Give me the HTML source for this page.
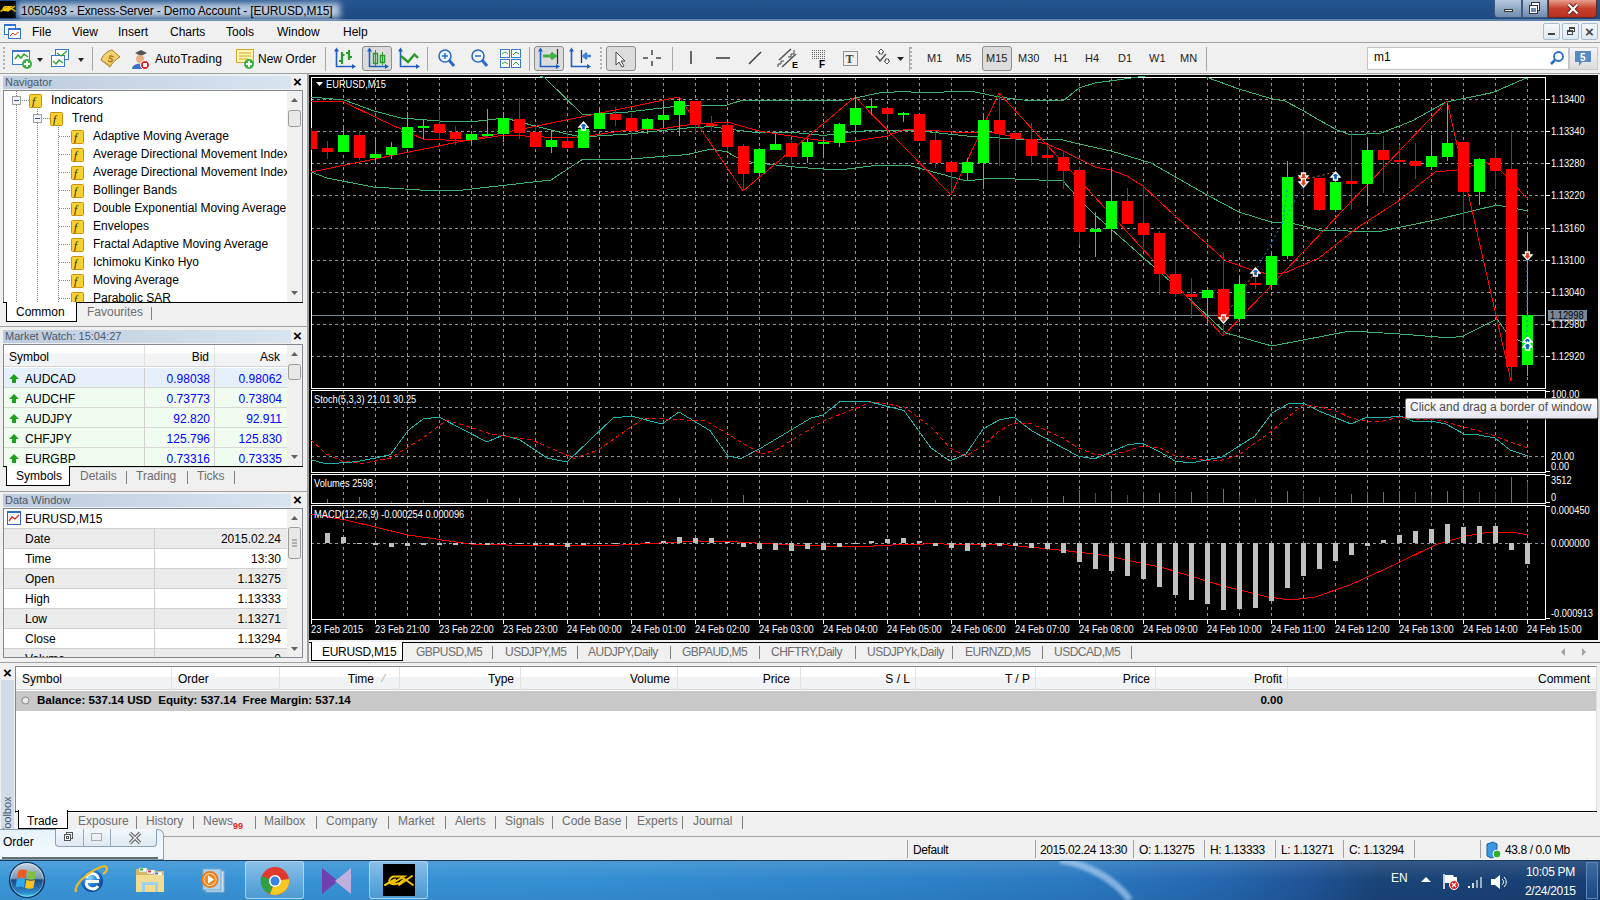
<!DOCTYPE html>
<html><head><meta charset="utf-8">
<style>
* { margin:0; padding:0; box-sizing:border-box; }
html,body { width:1600px; height:900px; overflow:hidden; background:#f0f0f0; font-family:"Liberation Sans", sans-serif; font-size:12px; color:#000; position:relative; }
.a { position:absolute; }
.t { position:absolute; white-space:nowrap; line-height:1.15; }
svg.a { overflow:visible; }
</style></head><body>
<div class="a" style="left:0px;top:0px;width:1600px;height:21px;background:linear-gradient(180deg,#26568f 0%,#214f88 50%,#1c4880 100%)"></div><div class="a" style="left:0px;top:19px;width:1600px;height:2px;background:#5d7fa8"></div><div class="a" style="left:0px;top:1px;width:16px;height:17px;background:#000"></div><svg class="a" style="left:0px;top:1px" width="16" height="17" viewBox="0 2 32 32"><path d="M2,21 L12,15.5 M10,12.5 H21 L9,19.5 M10,12.5 C6,14 5,18 8,19.5 C11,21 17,20 20,16 M16,21 L29,12 M18,12.5 L30,21" stroke="#f0c400" stroke-width="3" fill="none" stroke-linecap="round"/></svg><div class="a" style="left:18px;top:3px;width:322px;height:15px;background:rgba(200,212,228,.92);filter:blur(3px)"></div><div class="t" style="left:21px;top:5px;font-size:12px;color:#000;letter-spacing:-0.15px">1050493 - Exness-Server - Demo Account - [EURUSD,M15]</div><div class="a" style="left:1494px;top:0px;width:28px;height:18px;background:linear-gradient(180deg,#b7c8dc,#6e8cb0);border:1px solid #3c5a80;border-top:none;border-radius:0 0 0 4px"></div><div class="a" style="left:1504px;top:9px;width:9px;height:3px;background:#fff;border:1px solid #333"></div><div class="a" style="left:1522px;top:0px;width:26px;height:18px;background:linear-gradient(180deg,#b7c8dc,#6e8cb0);border:1px solid #3c5a80;border-top:none"></div><div class="a" style="left:1532px;top:3px;width:7px;height:7px;border:1px solid #fff;border-top-width:2px;box-shadow:0 0 0 1px #333"></div><div class="a" style="left:1530px;top:6px;width:7px;height:7px;background:#6e8cb0;border:1px solid #fff;border-top-width:2px;box-shadow:0 0 0 1px #333"></div><div class="a" style="left:1548px;top:0px;width:49px;height:18px;background:linear-gradient(180deg,#e8a090,#c8402c 50%,#b83020);border:1px solid #5a2a20;border-top:none;border-radius:0 0 4px 0"></div><svg class="a" style="left:1566px;top:3px" width="14" height="12"><path d="M2.5,1.5 L11.5,10.5 M11.5,1.5 L2.5,10.5" stroke="#5a2020" stroke-width="4"/><path d="M2.5,1.5 L11.5,10.5 M11.5,1.5 L2.5,10.5" stroke="#fff" stroke-width="2.2"/></svg><div class="a" style="left:0px;top:21px;width:1600px;height:21px;background:#f0f0f0"></div><svg class="a" style="left:3px;top:23px" width="19" height="17"><rect x="1.5" y="1.5" width="11" height="10" fill="#fff" stroke="#3070d0"/><rect x="1" y="1" width="12" height="2" fill="#3070d0"/><rect x="5.5" y="5.5" width="12" height="10" fill="#fff" stroke="#3070d0"/><rect x="5" y="5" width="13" height="2" fill="#3070d0"/><path d="M7,13 L10,10 L12,12 L16,9" stroke="#e04020" fill="none"/></svg><div class="t" style="left:32px;top:26px;font-size:12px;color:#000;">File</div><div class="t" style="left:72px;top:26px;font-size:12px;color:#000;">View</div><div class="t" style="left:118px;top:26px;font-size:12px;color:#000;">Insert</div><div class="t" style="left:170px;top:26px;font-size:12px;color:#000;">Charts</div><div class="t" style="left:226px;top:26px;font-size:12px;color:#000;">Tools</div><div class="t" style="left:277px;top:26px;font-size:12px;color:#000;">Window</div><div class="t" style="left:343px;top:26px;font-size:12px;color:#000;">Help</div><div class="a" style="left:1543px;top:23px;width:17px;height:17px;background:linear-gradient(180deg,#f4f8fc,#dfe8f2);border:1px solid #a8bcd4;border-radius:2px"></div><div class="a" style="left:1562px;top:23px;width:17px;height:17px;background:linear-gradient(180deg,#f4f8fc,#dfe8f2);border:1px solid #a8bcd4;border-radius:2px"></div><div class="a" style="left:1581px;top:23px;width:17px;height:17px;background:linear-gradient(180deg,#f4f8fc,#dfe8f2);border:1px solid #a8bcd4;border-radius:2px"></div><div class="a" style="left:1548px;top:33px;width:7px;height:2px;background:#444"></div><div class="a" style="left:1567px;top:30px;width:6px;height:5px;border:1px solid #444;border-top-width:2px"></div><div class="a" style="left:1569px;top:27px;width:6px;height:5px;border:1px solid #444;border-top-width:2px"></div><div class="t" style="left:1585px;top:23px;font-size:15px;color:#444;font-weight:bold">×</div><div class="a" style="left:0px;top:42px;width:1600px;height:1px;background:#a0a0a0"></div><div class="a" style="left:0px;top:43px;width:1600px;height:30px;background:#f0f0f0"></div><div class="a" style="left:0px;top:73px;width:1600px;height:1px;background:#a0a0a0"></div><div class="a" style="left:92px;top:47px;width:1px;height:24px;background:#a8a8a8"></div><div class="a" style="left:325px;top:47px;width:1px;height:24px;background:#a8a8a8"></div><div class="a" style="left:427px;top:47px;width:1px;height:24px;background:#a8a8a8"></div><div class="a" style="left:529px;top:47px;width:1px;height:24px;background:#a8a8a8"></div><div class="a" style="left:672px;top:47px;width:1px;height:24px;background:#a8a8a8"></div><div class="a" style="left:909px;top:47px;width:1px;height:24px;background:#a8a8a8"></div><div class="a" style="left:1206px;top:47px;width:1px;height:24px;background:#a8a8a8"></div><div class="a" style="left:3px;top:47px;width:2px;height:24px;background:repeating-linear-gradient(180deg,#b0b0b0 0 2px,transparent 2px 4px)"></div><div class="a" style="left:600px;top:47px;width:2px;height:24px;background:repeating-linear-gradient(180deg,#b0b0b0 0 2px,transparent 2px 4px)"></div><div class="a" style="left:910px;top:47px;width:2px;height:24px;background:repeating-linear-gradient(180deg,#b0b0b0 0 2px,transparent 2px 4px)"></div><svg class="a" style="left:10px;top:47px" width="80" height="24"><rect x="2.5" y="3.5" width="17" height="14" fill="#fff" stroke="#3a78d0"/><rect x="2" y="3" width="18" height="2" fill="#3a78d0"/><path d="M5,12 L8,8 L11,11 L14,7 L18,10" stroke="#30a030" fill="none" stroke-width="1.5"/><circle cx="17" cy="17" r="5" fill="#3cb040"/><path d="M14,17 H20 M17,14 V20" stroke="#fff" stroke-width="2"/><path d="M27,11 L33,11 L30,15 Z" fill="#222"/><rect x="45.5" y="2.5" width="13" height="10" fill="#fff" stroke="#3a78d0"/><rect x="41.5" y="8.5" width="13" height="11" fill="#fff" stroke="#3a78d0"/><path d="M43,14 L46,17 L49,13 L53,16" stroke="#30a030" fill="none" stroke-width="1.3"/><path d="M47,6 L51,9 L57,4" stroke="#30a030" fill="none" stroke-width="1.3"/><path d="M68,11 L74,11 L71,15 Z" fill="#222"/></svg><svg class="a" style="left:98px;top:47px" width="140" height="24"><path d="M3,13 C6,6 10,4 14,3 L22,10 C18,12 14,16 12,20 Z" fill="#f0d070" stroke="#a88020"/><path d="M5,14 L13,19" stroke="#c8a040"/><text x="10" y="15" font-size="10" font-weight="bold" fill="#b07010" font-family="Liberation Sans" transform="rotate(20 12 12)">5</text><path d="M37,6 L43,3 L49,6 L43,9 Z" fill="#555"/><circle cx="42" cy="12" r="4" fill="#e8b080"/><path d="M34,22 C34,15 50,15 50,22 Z" fill="#3a70c8"/><circle cx="47" cy="18" r="4.5" fill="#e02020" stroke="#fff"/><rect x="45" y="16" width="4" height="4" fill="#fff"/></svg><div class="t" style="left:155px;top:53px;font-size:12px;color:#000;letter-spacing:0.2px">AutoTrading</div><svg class="a" style="left:234px;top:47px" width="24" height="24"><rect x="2.5" y="2.5" width="17" height="13" fill="#fff4b0" stroke="#c8a830"/><path d="M5,6 H17 M5,9 H17 M5,12 H14" stroke="#c8a830"/><circle cx="15" cy="17" r="5" fill="#3cb040"/><path d="M12,17 H18 M15,14 V20" stroke="#fff" stroke-width="2"/></svg><div class="t" style="left:258px;top:53px;font-size:12px;color:#000;">New Order</div><div class="a" style="left:362px;top:46px;width:30px;height:25px;background:#dcdcdc;border:1px solid #8c8c8c;border-radius:3px"></div><div class="a" style="left:534px;top:46px;width:30px;height:25px;background:#dcdcdc;border:1px solid #8c8c8c;border-radius:3px"></div><div class="a" style="left:606px;top:46px;width:30px;height:25px;background:#dcdcdc;border:1px solid #8c8c8c;border-radius:3px"></div><div class="a" style="left:982px;top:46px;width:30px;height:25px;background:#dcdcdc;border:1px solid #8c8c8c;border-radius:3px"></div><svg class="a" style="left:330px;top:45px" width="600" height="28"><path d="M6.5,4 V21.5 H24" stroke="#1f5fc0" fill="none" stroke-width="1.6"/><path d="M4,6.5 L6.5,2.5 L9,6.5 Z M22,19 L26,21.5 L22,24 Z" fill="#1f5fc0"/><path d="M12,7 V19 M9,16 H12 M12,10 H14.5 M19,5 V15 M16,8 H19 M19,12 H22" stroke="#2a9a2a" stroke-width="2.2" fill="none"/><path d="M39.5,4 V21.5 H57" stroke="#1f5fc0" fill="none" stroke-width="1.6"/><path d="M37,6.5 L39.5,2.5 L42,6.5 Z M55,19 L59,21.5 L55,24 Z" fill="#1f5fc0"/><rect x="43.5" y="8.5" width="4" height="10" fill="none" stroke="#2a9a2a" stroke-width="1.5"/><path d="M45.5,5 V21" stroke="#2a9a2a"/><rect x="50.5" y="10.5" width="4" height="7" fill="none" stroke="#2a9a2a" stroke-width="1.5"/><path d="M52.5,7 V20" stroke="#2a9a2a"/><path d="M70.5,4 V21.5 H88" stroke="#1f5fc0" fill="none" stroke-width="1.6"/><path d="M68,6.5 L70.5,2.5 L73,6.5 Z M86,19 L90,21.5 L86,24 Z" fill="#1f5fc0"/><path d="M71,11 L78,17 L84.5,9.5 L88,13" stroke="#2a9a2a" stroke-width="2.4" fill="none"/><circle cx="115" cy="11" r="6" fill="#f0f8ff" stroke="#2a6ac8" stroke-width="1.6"/><path d="M119,15 L124,21" stroke="#2a6ac8" stroke-width="3"/><path d="M112,11 H118" stroke="#2a6ac8" stroke-width="1.5"/><path d="M115,8 V14" stroke="#2a6ac8" stroke-width="1.5"/><circle cx="148" cy="11" r="6" fill="#f0f8ff" stroke="#2a6ac8" stroke-width="1.6"/><path d="M152,15 L157,21" stroke="#2a6ac8" stroke-width="3"/><path d="M145,11 H151" stroke="#2a6ac8" stroke-width="1.5"/><g stroke="#3a78d0" fill="#fff"><rect x="170.5" y="4.5" width="9" height="8"/><rect x="181.5" y="4.5" width="9" height="8"/><rect x="170.5" y="14.5" width="9" height="8"/><rect x="181.5" y="14.5" width="9" height="8"/></g><path d="M172,9 L175,7 L178,9 M183,10 L186,7 L189,9 M172,19 L175,17 L178,19 M183,20 L186,17 L189,20" stroke="#30a030" fill="none"/><path d="M210.5,4 V21.5 H228" stroke="#1f5fc0" fill="none" stroke-width="1.6"/><path d="M208,6.5 L210.5,2.5 L213,6.5 Z M226,19 L230,21.5 L226,24 Z" fill="#1f5fc0"/><path d="M213,11 H224 M221,8 L225,11 L221,14" stroke="#40b040" stroke-width="3" fill="none"/><path d="M227.5,4 V19" stroke="#333" stroke-width="1.3"/><path d="M241.5,4 V21.5 H259" stroke="#1f5fc0" fill="none" stroke-width="1.6"/><path d="M239,6.5 L241.5,2.5 L244,6.5 Z M257,19 L261,21.5 L257,24 Z" fill="#1f5fc0"/><path d="M251.5,5 V18" stroke="#333" stroke-width="1.3"/><path d="M254,11 H261 M257,8 L253.5,11 L257,14" stroke="#3a88e0" stroke-width="2.5" fill="none"/><path d="M286,7 L286,20 L289,17 L292,22 L294,21 L291,16 L295,16 Z" fill="#fff" stroke="#444"/><path d="M322,5 V10 M322,16 V21 M313,13 H318 M326,13 H331" stroke="#444" stroke-width="1.5"/><path d="M361,6 V19" stroke="#444" stroke-width="1.6"/><path d="M386,13 H400" stroke="#444" stroke-width="1.6"/><path d="M419,19 L431,7" stroke="#444" stroke-width="1.6"/><path d="M449,15 L461,4 M452,22 L466,9" stroke="#555" stroke-width="1.6" fill="none"/><path d="M448,22 V19 H451 V16 H454 M458,12 H461 V9 H464 V5" stroke="#444" fill="none"/><text x="462" y="23" font-size="9" font-weight="bold" font-family="Liberation Sans">E</text><g fill="#666"><rect x="482" y="5" width="1" height="1"/><rect x="482" y="7" width="1" height="1"/><rect x="482" y="9" width="1" height="1"/><rect x="482" y="11" width="1" height="1"/><rect x="482" y="13" width="1" height="1"/><rect x="484" y="5" width="1" height="1"/><rect x="484" y="7" width="1" height="1"/><rect x="484" y="9" width="1" height="1"/><rect x="484" y="11" width="1" height="1"/><rect x="484" y="13" width="1" height="1"/><rect x="486" y="5" width="1" height="1"/><rect x="486" y="7" width="1" height="1"/><rect x="486" y="9" width="1" height="1"/><rect x="486" y="11" width="1" height="1"/><rect x="486" y="13" width="1" height="1"/><rect x="488" y="5" width="1" height="1"/><rect x="488" y="7" width="1" height="1"/><rect x="488" y="9" width="1" height="1"/><rect x="488" y="11" width="1" height="1"/><rect x="488" y="13" width="1" height="1"/><rect x="490" y="5" width="1" height="1"/><rect x="490" y="7" width="1" height="1"/><rect x="490" y="9" width="1" height="1"/><rect x="490" y="11" width="1" height="1"/><rect x="490" y="13" width="1" height="1"/><rect x="492" y="5" width="1" height="1"/><rect x="492" y="7" width="1" height="1"/><rect x="492" y="9" width="1" height="1"/><rect x="492" y="11" width="1" height="1"/><rect x="492" y="13" width="1" height="1"/><rect x="494" y="5" width="1" height="1"/><rect x="494" y="7" width="1" height="1"/><rect x="494" y="9" width="1" height="1"/><rect x="494" y="11" width="1" height="1"/><rect x="494" y="13" width="1" height="1"/></g><text x="489" y="23" font-size="10" font-weight="bold" font-family="Liberation Sans">F</text><rect x="513.5" y="6.5" width="14" height="14" fill="none" stroke="#333" stroke-dasharray="1,1"/><text x="515.5" y="18" font-size="12" font-family="Liberation Serif" font-weight="bold" fill="#444">T</text><path d="M546,11 L550,16 L556,9" stroke="#555" stroke-width="1.5" fill="none"/><path d="M551,4 L554,7 L552.5,7 L552.5,9 L549.5,9 L549.5,7 L548,7 Z M557,19 L560,16 L558.5,16 L558.5,14 L555.5,14 L555.5,16 L554,16 Z" fill="#fff" stroke="#555"/><path d="M567,12 L574,12 L570.5,16 Z" fill="#222"/></svg><div class="t" style="left:927px;top:52px;font-size:11px;color:#222;">M1</div><div class="t" style="left:956px;top:52px;font-size:11px;color:#222;">M5</div><div class="t" style="left:986px;top:52px;font-size:11px;color:#222;">M15</div><div class="t" style="left:1018px;top:52px;font-size:11px;color:#222;">M30</div><div class="t" style="left:1054px;top:52px;font-size:11px;color:#222;">H1</div><div class="t" style="left:1085px;top:52px;font-size:11px;color:#222;">H4</div><div class="t" style="left:1118px;top:52px;font-size:11px;color:#222;">D1</div><div class="t" style="left:1149px;top:52px;font-size:11px;color:#222;">W1</div><div class="t" style="left:1180px;top:52px;font-size:11px;color:#222;">MN</div><div class="a" style="left:1367px;top:47px;width:202px;height:23px;background:#fff;border:1px solid #c0c4c8"></div><div class="t" style="left:1374px;top:51px;font-size:12px;color:#000;">m1</div><svg class="a" style="left:1549px;top:50px" width="16" height="16"><circle cx="9.5" cy="6.5" r="4.5" fill="none" stroke="#2a6ac8" stroke-width="1.8"/><path d="M6,10 L2,14" stroke="#2a6ac8" stroke-width="2.5"/></svg><div class="a" style="left:1569px;top:47px;width:29px;height:23px;background:linear-gradient(180deg,#f4f4f4,#dcdcdc);border:1px solid #c8c8c8"></div><svg class="a" style="left:1574px;top:50px" width="20" height="18"><path d="M1,1 H17 V12 H8 L5,16 L5,12 H1 Z" fill="#5a88c0"/><text x="6" y="11" font-size="10" font-weight="bold" fill="#fff" font-family="Liberation Sans">5</text></svg><div class="a" style="left:0px;top:74px;width:307px;height:588px;background:#f0f0f0"></div><div class="a" style="left:307px;top:74px;width:2px;height:588px;background:#a0a0a0"></div><div class="a" style="left:3px;top:76px;width:288px;height:13px;background:linear-gradient(90deg,#bccbdd,#d8e4f0)"></div><div class="t" style="left:5px;top:76px;font-size:11px;color:#4a5868;">Navigator</div><div class="t" style="left:293px;top:73px;font-size:15px;color:#000;font-weight:bold">×</div><div class="a" style="left:3px;top:90px;width:300px;height:213px;background:#fff;border:1px solid #828790;border-bottom:none"></div><div class="a" style="left:3px;top:302px;width:300px;height:1px;background:#000"></div><div class="a" style="left:287px;top:91px;width:15px;height:211px;background:#f0f0f0"></div><svg class="a" style="left:287px;top:91px" width="15" height="211"><path d="M4,11 L7.5,7 L11,11 Z" fill="#606060"/><path d="M4,200 L7.5,204 L11,200 Z" fill="#606060"/><rect x="1.5" y="19.5" width="12" height="16" rx="2" fill="#e8e8e8" stroke="#9a9a9a"/></svg><div class="a" style="left:4px;top:91px;width:283px;height:211px;overflow:hidden"><svg class="a" style="left:0;top:0" width="283" height="211"><g stroke="#808080" stroke-dasharray="1,1"><line x1="12.5" y1="0" x2="12.5" y2="211"/><line x1="33.5" y1="14" x2="33.5" y2="211"/><line x1="54.5" y1="32" x2="54.5" y2="211"/><line x1="18" y1="9.5" x2="25" y2="9.5"/><line x1="39" y1="27.5" x2="46" y2="27.5"/><line x1="55" y1="45.5" x2="67" y2="45.5"/><line x1="55" y1="63.5" x2="67" y2="63.5"/><line x1="55" y1="81.5" x2="67" y2="81.5"/><line x1="55" y1="99.5" x2="67" y2="99.5"/><line x1="55" y1="117.5" x2="67" y2="117.5"/><line x1="55" y1="135.5" x2="67" y2="135.5"/><line x1="55" y1="153.5" x2="67" y2="153.5"/><line x1="55" y1="171.5" x2="67" y2="171.5"/><line x1="55" y1="189.5" x2="67" y2="189.5"/><line x1="55" y1="207.5" x2="67" y2="207.5"/></g><rect x="8.5" y="5.5" width="8" height="8" fill="#f4f4f4" stroke="#a0a0a0"/><line x1="10" y1="9.5" x2="15" y2="9.5" stroke="#3050a0"/><rect x="25.5" y="3.5" width="12" height="13" rx="1" fill="#f8d030" stroke="#c89010"/><text x="28" y="14" font-size="11" font-style="italic" font-family="Liberation Serif" fill="#222">f</text><rect x="29.5" y="23.5" width="8" height="8" fill="#f4f4f4" stroke="#a0a0a0"/><line x1="31" y1="27.5" x2="36" y2="27.5" stroke="#3050a0"/><rect x="46.5" y="21.5" width="12" height="13" rx="1" fill="#f8d030" stroke="#c89010"/><text x="49" y="32" font-size="11" font-style="italic" font-family="Liberation Serif" fill="#222">f</text><rect x="67.5" y="39.5" width="12" height="13" rx="1" fill="#f8d030" stroke="#c89010"/><text x="70" y="50" font-size="11" font-style="italic" font-family="Liberation Serif" fill="#222">f</text><rect x="67.5" y="57.5" width="12" height="13" rx="1" fill="#f8d030" stroke="#c89010"/><text x="70" y="68" font-size="11" font-style="italic" font-family="Liberation Serif" fill="#222">f</text><rect x="67.5" y="75.5" width="12" height="13" rx="1" fill="#f8d030" stroke="#c89010"/><text x="70" y="86" font-size="11" font-style="italic" font-family="Liberation Serif" fill="#222">f</text><rect x="67.5" y="93.5" width="12" height="13" rx="1" fill="#f8d030" stroke="#c89010"/><text x="70" y="104" font-size="11" font-style="italic" font-family="Liberation Serif" fill="#222">f</text><rect x="67.5" y="111.5" width="12" height="13" rx="1" fill="#f8d030" stroke="#c89010"/><text x="70" y="122" font-size="11" font-style="italic" font-family="Liberation Serif" fill="#222">f</text><rect x="67.5" y="129.5" width="12" height="13" rx="1" fill="#f8d030" stroke="#c89010"/><text x="70" y="140" font-size="11" font-style="italic" font-family="Liberation Serif" fill="#222">f</text><rect x="67.5" y="147.5" width="12" height="13" rx="1" fill="#f8d030" stroke="#c89010"/><text x="70" y="158" font-size="11" font-style="italic" font-family="Liberation Serif" fill="#222">f</text><rect x="67.5" y="165.5" width="12" height="13" rx="1" fill="#f8d030" stroke="#c89010"/><text x="70" y="176" font-size="11" font-style="italic" font-family="Liberation Serif" fill="#222">f</text><rect x="67.5" y="183.5" width="12" height="13" rx="1" fill="#f8d030" stroke="#c89010"/><text x="70" y="194" font-size="11" font-style="italic" font-family="Liberation Serif" fill="#222">f</text><rect x="67.5" y="201.5" width="12" height="13" rx="1" fill="#f8d030" stroke="#c89010"/><text x="70" y="212" font-size="11" font-style="italic" font-family="Liberation Serif" fill="#222">f</text></svg><div class="t" style="left:47px;top:3px;font-size:12px;color:#000;">Indicators</div><div class="t" style="left:68px;top:21px;font-size:12px;color:#000;">Trend</div><div class="t" style="left:89px;top:39px;font-size:12px;color:#000;">Adaptive Moving Average</div><div class="t" style="left:89px;top:57px;font-size:12px;color:#000;">Average Directional Movement Index</div><div class="t" style="left:89px;top:75px;font-size:12px;color:#000;">Average Directional Movement Index Wilder</div><div class="t" style="left:89px;top:93px;font-size:12px;color:#000;">Bollinger Bands</div><div class="t" style="left:89px;top:111px;font-size:12px;color:#000;">Double Exponential Moving Average</div><div class="t" style="left:89px;top:129px;font-size:12px;color:#000;">Envelopes</div><div class="t" style="left:89px;top:147px;font-size:12px;color:#000;">Fractal Adaptive Moving Average</div><div class="t" style="left:89px;top:165px;font-size:12px;color:#000;">Ichimoku Kinko Hyo</div><div class="t" style="left:89px;top:183px;font-size:12px;color:#000;">Moving Average</div><div class="t" style="left:89px;top:201px;font-size:12px;color:#000;">Parabolic SAR</div></div><div class="a" style="left:3px;top:303px;width:300px;height:21px;background:#f0f0f0"></div><div class="a" style="left:6px;top:302px;width:71px;height:20px;background:#fff;border:1px solid #000;border-top:none"></div><div class="t" style="left:16px;top:306px;font-size:12px;color:#000;">Common</div><div class="t" style="left:87px;top:306px;font-size:12px;color:#6d6d6d;">Favourites</div><div class="a" style="left:151px;top:307px;width:1px;height:13px;background:#808080"></div><div class="a" style="left:0px;top:326px;width:307px;height:1px;background:#a0a0a0"></div><div class="a" style="left:3px;top:330px;width:288px;height:13px;background:linear-gradient(90deg,#bccbdd,#d8e4f0)"></div><div class="t" style="left:5px;top:330px;font-size:11px;color:#4a5868;">Market Watch: 15:04:27</div><div class="t" style="left:293px;top:327px;font-size:15px;color:#000;font-weight:bold">×</div><div class="a" style="left:3px;top:344px;width:300px;height:123px;background:#fff;border:1px solid #828790;border-bottom:none"></div><div class="a" style="left:4px;top:345px;width:283px;height:22px;background:linear-gradient(180deg,#fff 0%,#fff 40%,#f2f3f5 41%,#f2f3f5 100%);border-bottom:1px solid #d5d5d5"></div><div class="a" style="left:144px;top:345px;width:1px;height:22px;background:#e0e0e0"></div><div class="a" style="left:214px;top:345px;width:1px;height:22px;background:#e0e0e0"></div><div class="t" style="left:9px;top:351px;font-size:12px;color:#000;">Symbol</div><div class="t" style="right:1391px;top:351px;font-size:12px;color:#000;">Bid</div><div class="t" style="right:1320px;top:351px;font-size:12px;color:#000;">Ask</div><div class="a" style="left:4px;top:368px;width:283px;height:20px;background:#e6f0fb;border-bottom:1px solid #d8d8d8"></div><div class="a" style="left:144px;top:368px;width:1px;height:20px;background:#d0d0d0"></div><div class="a" style="left:214px;top:368px;width:1px;height:20px;background:#d0d0d0"></div><svg class="a" style="left:9px;top:374px" width="10" height="10"><path d="M5,0 L10,5 L7,5 L7,9 L3,9 L3,5 L0,5 Z" fill="#20a020"/></svg><div class="t" style="left:25px;top:373px;font-size:12px;color:#000;">AUDCAD</div><div class="t" style="right:1390px;top:373px;font-size:12px;color:#0000ff;">0.98038</div><div class="t" style="right:1318px;top:373px;font-size:12px;color:#0000ff;">0.98062</div><div class="a" style="left:4px;top:388px;width:283px;height:20px;background:#effcef;border-bottom:1px solid #d8d8d8"></div><div class="a" style="left:144px;top:388px;width:1px;height:20px;background:#d0d0d0"></div><div class="a" style="left:214px;top:388px;width:1px;height:20px;background:#d0d0d0"></div><svg class="a" style="left:9px;top:394px" width="10" height="10"><path d="M5,0 L10,5 L7,5 L7,9 L3,9 L3,5 L0,5 Z" fill="#20a020"/></svg><div class="t" style="left:25px;top:393px;font-size:12px;color:#000;">AUDCHF</div><div class="t" style="right:1390px;top:393px;font-size:12px;color:#0000ff;">0.73773</div><div class="t" style="right:1318px;top:393px;font-size:12px;color:#0000ff;">0.73804</div><div class="a" style="left:4px;top:408px;width:283px;height:20px;background:#effcef;border-bottom:1px solid #d8d8d8"></div><div class="a" style="left:144px;top:408px;width:1px;height:20px;background:#d0d0d0"></div><div class="a" style="left:214px;top:408px;width:1px;height:20px;background:#d0d0d0"></div><svg class="a" style="left:9px;top:414px" width="10" height="10"><path d="M5,0 L10,5 L7,5 L7,9 L3,9 L3,5 L0,5 Z" fill="#20a020"/></svg><div class="t" style="left:25px;top:413px;font-size:12px;color:#000;">AUDJPY</div><div class="t" style="right:1390px;top:413px;font-size:12px;color:#0000ff;">92.820</div><div class="t" style="right:1318px;top:413px;font-size:12px;color:#0000ff;">92.911</div><div class="a" style="left:4px;top:428px;width:283px;height:20px;background:#effcef;border-bottom:1px solid #d8d8d8"></div><div class="a" style="left:144px;top:428px;width:1px;height:20px;background:#d0d0d0"></div><div class="a" style="left:214px;top:428px;width:1px;height:20px;background:#d0d0d0"></div><svg class="a" style="left:9px;top:434px" width="10" height="10"><path d="M5,0 L10,5 L7,5 L7,9 L3,9 L3,5 L0,5 Z" fill="#20a020"/></svg><div class="t" style="left:25px;top:433px;font-size:12px;color:#000;">CHFJPY</div><div class="t" style="right:1390px;top:433px;font-size:12px;color:#0000ff;">125.796</div><div class="t" style="right:1318px;top:433px;font-size:12px;color:#0000ff;">125.830</div><div class="a" style="left:4px;top:448px;width:283px;height:20px;background:#effcef;border-bottom:1px solid #d8d8d8"></div><div class="a" style="left:144px;top:448px;width:1px;height:20px;background:#d0d0d0"></div><div class="a" style="left:214px;top:448px;width:1px;height:20px;background:#d0d0d0"></div><svg class="a" style="left:9px;top:454px" width="10" height="10"><path d="M5,0 L10,5 L7,5 L7,9 L3,9 L3,5 L0,5 Z" fill="#20a020"/></svg><div class="t" style="left:25px;top:453px;font-size:12px;color:#000;">EURGBP</div><div class="t" style="right:1390px;top:453px;font-size:12px;color:#0000ff;">0.73316</div><div class="t" style="right:1318px;top:453px;font-size:12px;color:#0000ff;">0.73335</div><div class="a" style="left:287px;top:345px;width:15px;height:121px;background:#f0f0f0"></div><svg class="a" style="left:287px;top:345px" width="15" height="121"><path d="M4,11 L7.5,7 L11,11 Z" fill="#606060"/><path d="M4,110 L7.5,114 L11,110 Z" fill="#606060"/><rect x="1.5" y="19.5" width="12" height="15" rx="2" fill="#e8e8e8" stroke="#9a9a9a"/></svg><div class="a" style="left:3px;top:466px;width:300px;height:1px;background:#000"></div><div class="a" style="left:6px;top:466px;width:64px;height:20px;background:#fff;border:1px solid #000;border-top:none"></div><div class="t" style="left:16px;top:470px;font-size:12px;color:#000;">Symbols</div><div class="t" style="left:80px;top:470px;font-size:12px;color:#6d6d6d;">Details</div><div class="a" style="left:126px;top:471px;width:1px;height:13px;background:#808080"></div><div class="t" style="left:136px;top:470px;font-size:12px;color:#6d6d6d;">Trading</div><div class="a" style="left:187px;top:471px;width:1px;height:13px;background:#808080"></div><div class="t" style="left:197px;top:470px;font-size:12px;color:#6d6d6d;">Ticks</div><div class="a" style="left:234px;top:471px;width:1px;height:13px;background:#808080"></div><div class="a" style="left:0px;top:491px;width:307px;height:1px;background:#a0a0a0"></div><div class="a" style="left:3px;top:494px;width:288px;height:13px;background:linear-gradient(90deg,#bccbdd,#d8e4f0)"></div><div class="t" style="left:5px;top:494px;font-size:11px;color:#4a5868;">Data Window</div><div class="t" style="left:293px;top:491px;font-size:15px;color:#000;font-weight:bold">×</div><div class="a" style="left:3px;top:508px;width:300px;height:150px;background:#fff;border:1px solid #828790"></div><svg class="a" style="left:7px;top:511px" width="14" height="14"><rect x="0.5" y="0.5" width="13" height="13" fill="#fff" stroke="#2a6ac8"/><rect x="0" y="0" width="14" height="2" fill="#2a6ac8"/><path d="M2,10 L5,6 L8,8 L12,4" stroke="#e02020" fill="none" stroke-width="1.3"/></svg><div class="t" style="left:25px;top:513px;font-size:12px;color:#000;">EURUSD,M15</div><div class="a" style="left:4px;top:528px;width:283px;height:20px;background:#ebebeb;border-top:1px solid #d0d0d0"></div><div class="a" style="left:154px;top:528px;width:1px;height:20px;background:#d0d0d0"></div><div class="t" style="left:25px;top:533px;font-size:12px;color:#000;">Date</div><div class="t" style="right:1319px;top:533px;font-size:12px;color:#000;">2015.02.24</div><div class="a" style="left:4px;top:548px;width:283px;height:20px;background:#fff;border-top:1px solid #d0d0d0"></div><div class="a" style="left:154px;top:548px;width:1px;height:20px;background:#d0d0d0"></div><div class="t" style="left:25px;top:553px;font-size:12px;color:#000;">Time</div><div class="t" style="right:1319px;top:553px;font-size:12px;color:#000;">13:30</div><div class="a" style="left:4px;top:568px;width:283px;height:20px;background:#ebebeb;border-top:1px solid #d0d0d0"></div><div class="a" style="left:154px;top:568px;width:1px;height:20px;background:#d0d0d0"></div><div class="t" style="left:25px;top:573px;font-size:12px;color:#000;">Open</div><div class="t" style="right:1319px;top:573px;font-size:12px;color:#000;">1.13275</div><div class="a" style="left:4px;top:588px;width:283px;height:20px;background:#fff;border-top:1px solid #d0d0d0"></div><div class="a" style="left:154px;top:588px;width:1px;height:20px;background:#d0d0d0"></div><div class="t" style="left:25px;top:593px;font-size:12px;color:#000;">High</div><div class="t" style="right:1319px;top:593px;font-size:12px;color:#000;">1.13333</div><div class="a" style="left:4px;top:608px;width:283px;height:20px;background:#ebebeb;border-top:1px solid #d0d0d0"></div><div class="a" style="left:154px;top:608px;width:1px;height:20px;background:#d0d0d0"></div><div class="t" style="left:25px;top:613px;font-size:12px;color:#000;">Low</div><div class="t" style="right:1319px;top:613px;font-size:12px;color:#000;">1.13271</div><div class="a" style="left:4px;top:628px;width:283px;height:20px;background:#fff;border-top:1px solid #d0d0d0"></div><div class="a" style="left:154px;top:628px;width:1px;height:20px;background:#d0d0d0"></div><div class="t" style="left:25px;top:633px;font-size:12px;color:#000;">Close</div><div class="t" style="right:1319px;top:633px;font-size:12px;color:#000;">1.13294</div><div class="a" style="left:4px;top:648px;width:283px;height:9px;background:#ebebeb;border-top:1px solid #d0d0d0"></div><div class="a" style="left:154px;top:648px;width:1px;height:9px;background:#d0d0d0"></div><div class="a" style="left:4px;top:648px;width:283px;height:9px;overflow:hidden"><div class="t" style="left:21px;top:5px;font-size:12px">Volume</div><div class="t" style="right:6px;top:5px;font-size:12px">0</div></div><div class="a" style="left:287px;top:509px;width:15px;height:148px;background:#f0f0f0"></div><svg class="a" style="left:287px;top:509px" width="15" height="148"><path d="M4,11 L7.5,7 L11,11 Z" fill="#606060"/><path d="M4,138 L7.5,142 L11,138 Z" fill="#606060"/><rect x="1.5" y="18.5" width="12" height="31" rx="2" fill="#e8e8e8" stroke="#9a9a9a"/><path d="M5,31 H10 M5,34 H10 M5,37 H10" stroke="#777"/></svg><svg width="1291" height="565" viewBox="309 75 1291 565" style="position:absolute;left:309px;top:75px" shape-rendering="crispEdges">
<rect x="309" y="75" width="1289" height="565" fill="#000"/><rect x="1598" y="75" width="2" height="565" fill="#f0f0f0"/>
<g stroke="#8898a8" stroke-width="1" stroke-dasharray="3,3"><line x1="343.5" y1="77" x2="343.5" y2="388"/><line x1="343.5" y1="390" x2="343.5" y2="472"/><line x1="343.5" y1="474" x2="343.5" y2="503"/><line x1="343.5" y1="505" x2="343.5" y2="619"/><line x1="375.5" y1="77" x2="375.5" y2="388"/><line x1="375.5" y1="390" x2="375.5" y2="472"/><line x1="375.5" y1="474" x2="375.5" y2="503"/><line x1="375.5" y1="505" x2="375.5" y2="619"/><line x1="407.5" y1="77" x2="407.5" y2="388"/><line x1="407.5" y1="390" x2="407.5" y2="472"/><line x1="407.5" y1="474" x2="407.5" y2="503"/><line x1="407.5" y1="505" x2="407.5" y2="619"/><line x1="439.5" y1="77" x2="439.5" y2="388"/><line x1="439.5" y1="390" x2="439.5" y2="472"/><line x1="439.5" y1="474" x2="439.5" y2="503"/><line x1="439.5" y1="505" x2="439.5" y2="619"/><line x1="471.5" y1="77" x2="471.5" y2="388"/><line x1="471.5" y1="390" x2="471.5" y2="472"/><line x1="471.5" y1="474" x2="471.5" y2="503"/><line x1="471.5" y1="505" x2="471.5" y2="619"/><line x1="503.5" y1="77" x2="503.5" y2="388"/><line x1="503.5" y1="390" x2="503.5" y2="472"/><line x1="503.5" y1="474" x2="503.5" y2="503"/><line x1="503.5" y1="505" x2="503.5" y2="619"/><line x1="535.5" y1="77" x2="535.5" y2="388"/><line x1="535.5" y1="390" x2="535.5" y2="472"/><line x1="535.5" y1="474" x2="535.5" y2="503"/><line x1="535.5" y1="505" x2="535.5" y2="619"/><line x1="567.5" y1="77" x2="567.5" y2="388"/><line x1="567.5" y1="390" x2="567.5" y2="472"/><line x1="567.5" y1="474" x2="567.5" y2="503"/><line x1="567.5" y1="505" x2="567.5" y2="619"/><line x1="599.5" y1="77" x2="599.5" y2="388"/><line x1="599.5" y1="390" x2="599.5" y2="472"/><line x1="599.5" y1="474" x2="599.5" y2="503"/><line x1="599.5" y1="505" x2="599.5" y2="619"/><line x1="631.5" y1="77" x2="631.5" y2="388"/><line x1="631.5" y1="390" x2="631.5" y2="472"/><line x1="631.5" y1="474" x2="631.5" y2="503"/><line x1="631.5" y1="505" x2="631.5" y2="619"/><line x1="663.5" y1="77" x2="663.5" y2="388"/><line x1="663.5" y1="390" x2="663.5" y2="472"/><line x1="663.5" y1="474" x2="663.5" y2="503"/><line x1="663.5" y1="505" x2="663.5" y2="619"/><line x1="695.5" y1="77" x2="695.5" y2="388"/><line x1="695.5" y1="390" x2="695.5" y2="472"/><line x1="695.5" y1="474" x2="695.5" y2="503"/><line x1="695.5" y1="505" x2="695.5" y2="619"/><line x1="727.5" y1="77" x2="727.5" y2="388"/><line x1="727.5" y1="390" x2="727.5" y2="472"/><line x1="727.5" y1="474" x2="727.5" y2="503"/><line x1="727.5" y1="505" x2="727.5" y2="619"/><line x1="759.5" y1="77" x2="759.5" y2="388"/><line x1="759.5" y1="390" x2="759.5" y2="472"/><line x1="759.5" y1="474" x2="759.5" y2="503"/><line x1="759.5" y1="505" x2="759.5" y2="619"/><line x1="791.5" y1="77" x2="791.5" y2="388"/><line x1="791.5" y1="390" x2="791.5" y2="472"/><line x1="791.5" y1="474" x2="791.5" y2="503"/><line x1="791.5" y1="505" x2="791.5" y2="619"/><line x1="823.5" y1="77" x2="823.5" y2="388"/><line x1="823.5" y1="390" x2="823.5" y2="472"/><line x1="823.5" y1="474" x2="823.5" y2="503"/><line x1="823.5" y1="505" x2="823.5" y2="619"/><line x1="855.5" y1="77" x2="855.5" y2="388"/><line x1="855.5" y1="390" x2="855.5" y2="472"/><line x1="855.5" y1="474" x2="855.5" y2="503"/><line x1="855.5" y1="505" x2="855.5" y2="619"/><line x1="887.5" y1="77" x2="887.5" y2="388"/><line x1="887.5" y1="390" x2="887.5" y2="472"/><line x1="887.5" y1="474" x2="887.5" y2="503"/><line x1="887.5" y1="505" x2="887.5" y2="619"/><line x1="919.5" y1="77" x2="919.5" y2="388"/><line x1="919.5" y1="390" x2="919.5" y2="472"/><line x1="919.5" y1="474" x2="919.5" y2="503"/><line x1="919.5" y1="505" x2="919.5" y2="619"/><line x1="951.5" y1="77" x2="951.5" y2="388"/><line x1="951.5" y1="390" x2="951.5" y2="472"/><line x1="951.5" y1="474" x2="951.5" y2="503"/><line x1="951.5" y1="505" x2="951.5" y2="619"/><line x1="983.5" y1="77" x2="983.5" y2="388"/><line x1="983.5" y1="390" x2="983.5" y2="472"/><line x1="983.5" y1="474" x2="983.5" y2="503"/><line x1="983.5" y1="505" x2="983.5" y2="619"/><line x1="1015.5" y1="77" x2="1015.5" y2="388"/><line x1="1015.5" y1="390" x2="1015.5" y2="472"/><line x1="1015.5" y1="474" x2="1015.5" y2="503"/><line x1="1015.5" y1="505" x2="1015.5" y2="619"/><line x1="1047.5" y1="77" x2="1047.5" y2="388"/><line x1="1047.5" y1="390" x2="1047.5" y2="472"/><line x1="1047.5" y1="474" x2="1047.5" y2="503"/><line x1="1047.5" y1="505" x2="1047.5" y2="619"/><line x1="1079.5" y1="77" x2="1079.5" y2="388"/><line x1="1079.5" y1="390" x2="1079.5" y2="472"/><line x1="1079.5" y1="474" x2="1079.5" y2="503"/><line x1="1079.5" y1="505" x2="1079.5" y2="619"/><line x1="1111.5" y1="77" x2="1111.5" y2="388"/><line x1="1111.5" y1="390" x2="1111.5" y2="472"/><line x1="1111.5" y1="474" x2="1111.5" y2="503"/><line x1="1111.5" y1="505" x2="1111.5" y2="619"/><line x1="1143.5" y1="77" x2="1143.5" y2="388"/><line x1="1143.5" y1="390" x2="1143.5" y2="472"/><line x1="1143.5" y1="474" x2="1143.5" y2="503"/><line x1="1143.5" y1="505" x2="1143.5" y2="619"/><line x1="1175.5" y1="77" x2="1175.5" y2="388"/><line x1="1175.5" y1="390" x2="1175.5" y2="472"/><line x1="1175.5" y1="474" x2="1175.5" y2="503"/><line x1="1175.5" y1="505" x2="1175.5" y2="619"/><line x1="1207.5" y1="77" x2="1207.5" y2="388"/><line x1="1207.5" y1="390" x2="1207.5" y2="472"/><line x1="1207.5" y1="474" x2="1207.5" y2="503"/><line x1="1207.5" y1="505" x2="1207.5" y2="619"/><line x1="1239.5" y1="77" x2="1239.5" y2="388"/><line x1="1239.5" y1="390" x2="1239.5" y2="472"/><line x1="1239.5" y1="474" x2="1239.5" y2="503"/><line x1="1239.5" y1="505" x2="1239.5" y2="619"/><line x1="1271.5" y1="77" x2="1271.5" y2="388"/><line x1="1271.5" y1="390" x2="1271.5" y2="472"/><line x1="1271.5" y1="474" x2="1271.5" y2="503"/><line x1="1271.5" y1="505" x2="1271.5" y2="619"/><line x1="1303.5" y1="77" x2="1303.5" y2="388"/><line x1="1303.5" y1="390" x2="1303.5" y2="472"/><line x1="1303.5" y1="474" x2="1303.5" y2="503"/><line x1="1303.5" y1="505" x2="1303.5" y2="619"/><line x1="1335.5" y1="77" x2="1335.5" y2="388"/><line x1="1335.5" y1="390" x2="1335.5" y2="472"/><line x1="1335.5" y1="474" x2="1335.5" y2="503"/><line x1="1335.5" y1="505" x2="1335.5" y2="619"/><line x1="1367.5" y1="77" x2="1367.5" y2="388"/><line x1="1367.5" y1="390" x2="1367.5" y2="472"/><line x1="1367.5" y1="474" x2="1367.5" y2="503"/><line x1="1367.5" y1="505" x2="1367.5" y2="619"/><line x1="1399.5" y1="77" x2="1399.5" y2="388"/><line x1="1399.5" y1="390" x2="1399.5" y2="472"/><line x1="1399.5" y1="474" x2="1399.5" y2="503"/><line x1="1399.5" y1="505" x2="1399.5" y2="619"/><line x1="1431.5" y1="77" x2="1431.5" y2="388"/><line x1="1431.5" y1="390" x2="1431.5" y2="472"/><line x1="1431.5" y1="474" x2="1431.5" y2="503"/><line x1="1431.5" y1="505" x2="1431.5" y2="619"/><line x1="1463.5" y1="77" x2="1463.5" y2="388"/><line x1="1463.5" y1="390" x2="1463.5" y2="472"/><line x1="1463.5" y1="474" x2="1463.5" y2="503"/><line x1="1463.5" y1="505" x2="1463.5" y2="619"/><line x1="1495.5" y1="77" x2="1495.5" y2="388"/><line x1="1495.5" y1="390" x2="1495.5" y2="472"/><line x1="1495.5" y1="474" x2="1495.5" y2="503"/><line x1="1495.5" y1="505" x2="1495.5" y2="619"/><line x1="1527.5" y1="77" x2="1527.5" y2="388"/><line x1="1527.5" y1="390" x2="1527.5" y2="472"/><line x1="1527.5" y1="474" x2="1527.5" y2="503"/><line x1="1527.5" y1="505" x2="1527.5" y2="619"/><line x1="311" y1="99.5" x2="1545" y2="99.5"/><line x1="311" y1="131.5" x2="1545" y2="131.5"/><line x1="311" y1="163.5" x2="1545" y2="163.5"/><line x1="311" y1="195.5" x2="1545" y2="195.5"/><line x1="311" y1="228.5" x2="1545" y2="228.5"/><line x1="311" y1="260.5" x2="1545" y2="260.5"/><line x1="311" y1="292.5" x2="1545" y2="292.5"/><line x1="311" y1="324.5" x2="1545" y2="324.5"/><line x1="311" y1="356.5" x2="1545" y2="356.5"/><line x1="311" y1="407.5" x2="1545" y2="407.5"/><line x1="311" y1="456.5" x2="1545" y2="456.5"/><line x1="311" y1="543.5" x2="1545" y2="543.5"/></g>
<rect x="311.5" y="77.5" width="1234" height="311" fill="none" stroke="#fff" stroke-width="1"/>
<rect x="311.5" y="390.5" width="1234" height="82" fill="none" stroke="#fff" stroke-width="1"/>
<rect x="311.5" y="474.5" width="1234" height="29" fill="none" stroke="#fff" stroke-width="1"/>
<rect x="311.5" y="505.5" width="1234" height="114" fill="none" stroke="#fff" stroke-width="1"/>
<line x1="312" y1="315.5" x2="1545" y2="315.5" stroke="#778899"/>
<rect x="1548" y="310" width="39" height="11" fill="#778899"/>
<g fill="#fff" font-family='"Liberation Sans", sans-serif' font-size="10px" shape-rendering="auto"><line x1="1546" y1="99.5" x2="1550" y2="99.5" stroke="#fff"/><text transform="translate(1551,102.5) scale(0.93,1)">1.13400</text><line x1="1546" y1="131.5" x2="1550" y2="131.5" stroke="#fff"/><text transform="translate(1551,134.5) scale(0.93,1)">1.13340</text><line x1="1546" y1="163.5" x2="1550" y2="163.5" stroke="#fff"/><text transform="translate(1551,166.5) scale(0.93,1)">1.13280</text><line x1="1546" y1="195.5" x2="1550" y2="195.5" stroke="#fff"/><text transform="translate(1551,198.5) scale(0.93,1)">1.13220</text><line x1="1546" y1="228.5" x2="1550" y2="228.5" stroke="#fff"/><text transform="translate(1551,231.5) scale(0.93,1)">1.13160</text><line x1="1546" y1="260.5" x2="1550" y2="260.5" stroke="#fff"/><text transform="translate(1551,263.5) scale(0.93,1)">1.13100</text><line x1="1546" y1="292.5" x2="1550" y2="292.5" stroke="#fff"/><text transform="translate(1551,295.5) scale(0.93,1)">1.13040</text><line x1="1546" y1="324.5" x2="1550" y2="324.5" stroke="#fff"/><text transform="translate(1551,327.5) scale(0.93,1)">1.12980</text><line x1="1546" y1="356.5" x2="1550" y2="356.5" stroke="#fff"/><text transform="translate(1551,359.5) scale(0.93,1)">1.12920</text><text transform="translate(1550,319) scale(0.93,1)" fill="#000">1.12998</text><text transform="translate(1551,398) scale(0.93,1)">100.00</text><text transform="translate(1551,460) scale(0.93,1)">20.00</text><text transform="translate(1551,470) scale(0.93,1)">0.00</text><text transform="translate(1551,483.5) scale(0.93,1)">3512</text><text transform="translate(1551,501) scale(0.93,1)">0</text><text transform="translate(1551,514) scale(0.93,1)">0.000450</text><text transform="translate(1551,546.5) scale(0.93,1)">0.000000</text><text transform="translate(1551,617) scale(0.93,1)">-0.000913</text><line x1="1546" y1="391.5" x2="1550" y2="391.5" stroke="#fff"/><line x1="1546" y1="471.5" x2="1550" y2="471.5" stroke="#fff"/><line x1="1546" y1="475.5" x2="1550" y2="475.5" stroke="#fff"/><line x1="1546" y1="502.5" x2="1550" y2="502.5" stroke="#fff"/><line x1="1546" y1="506.5" x2="1550" y2="506.5" stroke="#fff"/><line x1="1546" y1="618.5" x2="1550" y2="618.5" stroke="#fff"/><line x1="311.5" y1="620" x2="311.5" y2="624" stroke="#fff"/><text transform="translate(311,632.5) scale(0.93,1)">23 Feb 2015</text><line x1="375.5" y1="620" x2="375.5" y2="624" stroke="#fff"/><text transform="translate(375,632.5) scale(0.93,1)">23 Feb 21:00</text><line x1="439.5" y1="620" x2="439.5" y2="624" stroke="#fff"/><text transform="translate(439,632.5) scale(0.93,1)">23 Feb 22:00</text><line x1="503.5" y1="620" x2="503.5" y2="624" stroke="#fff"/><text transform="translate(503,632.5) scale(0.93,1)">23 Feb 23:00</text><line x1="567.5" y1="620" x2="567.5" y2="624" stroke="#fff"/><text transform="translate(567,632.5) scale(0.93,1)">24 Feb 00:00</text><line x1="631.5" y1="620" x2="631.5" y2="624" stroke="#fff"/><text transform="translate(631,632.5) scale(0.93,1)">24 Feb 01:00</text><line x1="695.5" y1="620" x2="695.5" y2="624" stroke="#fff"/><text transform="translate(695,632.5) scale(0.93,1)">24 Feb 02:00</text><line x1="759.5" y1="620" x2="759.5" y2="624" stroke="#fff"/><text transform="translate(759,632.5) scale(0.93,1)">24 Feb 03:00</text><line x1="823.5" y1="620" x2="823.5" y2="624" stroke="#fff"/><text transform="translate(823,632.5) scale(0.93,1)">24 Feb 04:00</text><line x1="887.5" y1="620" x2="887.5" y2="624" stroke="#fff"/><text transform="translate(887,632.5) scale(0.93,1)">24 Feb 05:00</text><line x1="951.5" y1="620" x2="951.5" y2="624" stroke="#fff"/><text transform="translate(951,632.5) scale(0.93,1)">24 Feb 06:00</text><line x1="1015.5" y1="620" x2="1015.5" y2="624" stroke="#fff"/><text transform="translate(1015,632.5) scale(0.93,1)">24 Feb 07:00</text><line x1="1079.5" y1="620" x2="1079.5" y2="624" stroke="#fff"/><text transform="translate(1079,632.5) scale(0.93,1)">24 Feb 08:00</text><line x1="1143.5" y1="620" x2="1143.5" y2="624" stroke="#fff"/><text transform="translate(1143,632.5) scale(0.93,1)">24 Feb 09:00</text><line x1="1207.5" y1="620" x2="1207.5" y2="624" stroke="#fff"/><text transform="translate(1207,632.5) scale(0.93,1)">24 Feb 10:00</text><line x1="1271.5" y1="620" x2="1271.5" y2="624" stroke="#fff"/><text transform="translate(1271,632.5) scale(0.93,1)">24 Feb 11:00</text><line x1="1335.5" y1="620" x2="1335.5" y2="624" stroke="#fff"/><text transform="translate(1335,632.5) scale(0.93,1)">24 Feb 12:00</text><line x1="1399.5" y1="620" x2="1399.5" y2="624" stroke="#fff"/><text transform="translate(1399,632.5) scale(0.93,1)">24 Feb 13:00</text><line x1="1463.5" y1="620" x2="1463.5" y2="624" stroke="#fff"/><text transform="translate(1463,632.5) scale(0.93,1)">24 Feb 14:00</text><line x1="1527.5" y1="620" x2="1527.5" y2="624" stroke="#fff"/><text transform="translate(1527,632.5) scale(0.93,1)">24 Feb 15:00</text></g>
<g fill="none" stroke-width="1">
<polyline points="540,76 545,78 583,115 628,112 687,105 727,105 743,100 815,100 839,101 855,98 879,93 903,91.4 911,92 938,93 948,91.4 975,92 999,97 1023,100 1063,101 1079,88 1095,83 1127,78.6 1145,76" stroke="#3cb371"/>
<polyline points="1206,77 1239,89 1271,98.6 1285,101 1303,110.6 1319,120 1337,130 1351,135 1381,133 1412,121 1446,102 1493,92.5 1524,79 1528,78.5" stroke="#3cb371"/>
<polyline points="311,97 344,100 374,111 401,118 452,122 478,121 505,118 535,126 567,134 582,137 628,134 687,128 711,126.6 751,132 799,133 823,135.4 839,134 855,131.4 887,130 911,130 967,136 1015,139 1063,140 1079,144 1111,151 1151,163 1207,195 1239,212 1271,222 1295,224 1319,230 1377,232 1435,220 1497,205 1528,211" stroke="#3cb371"/>
<polyline points="311,172 327,178 373,187 420,190 454,191 551,180 583,159 599,160 631,159 655,157 687,154.6 711,149 727,152 743,161 767,164 799,167.4 823,169 847,169 879,165 911,166 967,181 991,178 1063,181 1079,199 1094,214 1171,282 1226,333 1272,346 1350,331 1400,334 1450,338 1463,336 1497,319 1510,337 1528,344" stroke="#3cb371"/>
<polyline points="311,101 342,101 381,120 423,139 466,141 505,135 544,137 582,137 621,131 660,129 687,125 727,122 759,131 807,138.6 839,142.6 855,141 887,136 903,130 911,129 967,133 991,132 1047,144 1063,151 1095,167 1111,170 1127,176 1143,186 1175,216 1207,244 1226,261 1255,271 1272,275 1287,272 1319,258 1357,228 1400,200 1435,172 1457,170 1485,162 1501,171 1528,199" stroke="#ff0000"/>
<polyline points="311,172 679,97 743,191 855,97 951,195 999,93 1223,336 1447,101 1511,381" stroke="#ff0000"/>
</g>
<g><rect x="311" y="128" width="1" height="22" fill="#ff0000"/><rect x="312" y="131" width="5" height="18" fill="#ff0000"/><rect x="327" y="141" width="1" height="18" fill="#ff0000"/><rect x="322" y="148" width="11" height="4" fill="#ff0000"/><rect x="343" y="128" width="1" height="24" fill="#00ff00"/><rect x="338" y="135" width="11" height="17" fill="#00ff00"/><rect x="359" y="131" width="1" height="29" fill="#ff0000"/><rect x="354" y="135" width="11" height="23" fill="#ff0000"/><rect x="375" y="137" width="1" height="27" fill="#00ff00"/><rect x="370" y="154" width="11" height="4" fill="#00ff00"/><rect x="391" y="142" width="1" height="17" fill="#00ff00"/><rect x="386" y="147" width="11" height="8" fill="#00ff00"/><rect x="407" y="112" width="1" height="36" fill="#00ff00"/><rect x="402" y="127" width="11" height="21" fill="#00ff00"/><rect x="423" y="120" width="1" height="19" fill="#00ff00"/><rect x="418" y="126" width="11" height="2" fill="#00ff00"/><rect x="439" y="111" width="1" height="29" fill="#ff0000"/><rect x="434" y="124" width="11" height="9" fill="#ff0000"/><rect x="455" y="126" width="1" height="19" fill="#ff0000"/><rect x="450" y="132" width="11" height="7" fill="#ff0000"/><rect x="471" y="131" width="1" height="13" fill="#00ff00"/><rect x="466" y="134" width="11" height="6" fill="#00ff00"/><rect x="487" y="109" width="1" height="27" fill="#00ff00"/><rect x="482" y="134" width="11" height="2" fill="#00ff00"/><rect x="503" y="112" width="1" height="30" fill="#00ff00"/><rect x="498" y="118" width="11" height="16" fill="#00ff00"/><rect x="519" y="98" width="1" height="41" fill="#ff0000"/><rect x="514" y="119" width="11" height="14" fill="#ff0000"/><rect x="535" y="127" width="1" height="20" fill="#ff0000"/><rect x="530" y="132" width="11" height="15" fill="#ff0000"/><rect x="551" y="132" width="1" height="21" fill="#00ff00"/><rect x="546" y="140" width="11" height="7" fill="#00ff00"/><rect x="567" y="131" width="1" height="17" fill="#ff0000"/><rect x="562" y="141" width="11" height="7" fill="#ff0000"/><rect x="583" y="129" width="1" height="19" fill="#00ff00"/><rect x="578" y="129" width="11" height="19" fill="#00ff00"/><rect x="599" y="107" width="1" height="22" fill="#00ff00"/><rect x="594" y="113" width="11" height="16" fill="#00ff00"/><rect x="615" y="107" width="1" height="19" fill="#ff0000"/><rect x="610" y="114" width="11" height="6" fill="#ff0000"/><rect x="631" y="113" width="1" height="27" fill="#ff0000"/><rect x="626" y="118" width="11" height="12" fill="#ff0000"/><rect x="647" y="118" width="1" height="16" fill="#00ff00"/><rect x="642" y="119" width="11" height="10" fill="#00ff00"/><rect x="663" y="101" width="1" height="24" fill="#00ff00"/><rect x="658" y="115" width="11" height="5" fill="#00ff00"/><rect x="679" y="98" width="1" height="38" fill="#00ff00"/><rect x="674" y="101" width="11" height="14" fill="#00ff00"/><rect x="695" y="101" width="1" height="32" fill="#ff0000"/><rect x="690" y="101" width="11" height="23" fill="#ff0000"/><rect x="711" y="116" width="1" height="15" fill="#ff0000"/><rect x="706" y="124" width="11" height="2" fill="#ff0000"/><rect x="727" y="122" width="1" height="29" fill="#ff0000"/><rect x="722" y="125" width="11" height="22" fill="#ff0000"/><rect x="743" y="144" width="1" height="47" fill="#ff0000"/><rect x="738" y="146" width="11" height="28" fill="#ff0000"/><rect x="759" y="148" width="1" height="25" fill="#00ff00"/><rect x="754" y="149" width="11" height="24" fill="#00ff00"/><rect x="775" y="134" width="1" height="16" fill="#00ff00"/><rect x="770" y="144" width="11" height="6" fill="#00ff00"/><rect x="791" y="141" width="1" height="23" fill="#ff0000"/><rect x="786" y="143" width="11" height="14" fill="#ff0000"/><rect x="807" y="139" width="1" height="24" fill="#00ff00"/><rect x="802" y="142" width="11" height="15" fill="#00ff00"/><rect x="823" y="140" width="1" height="18" fill="#00ff00"/><rect x="818" y="142" width="11" height="2" fill="#00ff00"/><rect x="839" y="123" width="1" height="24" fill="#00ff00"/><rect x="834" y="124" width="11" height="19" fill="#00ff00"/><rect x="855" y="97" width="1" height="35" fill="#00ff00"/><rect x="850" y="108" width="11" height="17" fill="#00ff00"/><rect x="871" y="98" width="1" height="17" fill="#00ff00"/><rect x="866" y="106" width="11" height="2" fill="#00ff00"/><rect x="887" y="108" width="1" height="14" fill="#ff0000"/><rect x="882" y="108" width="11" height="6" fill="#ff0000"/><rect x="903" y="112" width="1" height="10" fill="#00ff00"/><rect x="898" y="113" width="11" height="2" fill="#00ff00"/><rect x="919" y="114" width="1" height="27" fill="#ff0000"/><rect x="914" y="114" width="11" height="27" fill="#ff0000"/><rect x="935" y="130" width="1" height="38" fill="#ff0000"/><rect x="930" y="140" width="11" height="23" fill="#ff0000"/><rect x="951" y="162" width="1" height="33" fill="#ff0000"/><rect x="946" y="162" width="11" height="10" fill="#ff0000"/><rect x="967" y="158" width="1" height="22" fill="#00ff00"/><rect x="962" y="162" width="11" height="11" fill="#00ff00"/><rect x="983" y="115" width="1" height="74" fill="#00ff00"/><rect x="978" y="120" width="11" height="43" fill="#00ff00"/><rect x="999" y="93" width="1" height="73" fill="#ff0000"/><rect x="994" y="120" width="11" height="14" fill="#ff0000"/><rect x="1015" y="130" width="1" height="39" fill="#ff0000"/><rect x="1010" y="133" width="11" height="6" fill="#ff0000"/><rect x="1031" y="123" width="1" height="43" fill="#ff0000"/><rect x="1026" y="139" width="11" height="17" fill="#ff0000"/><rect x="1047" y="144" width="1" height="42" fill="#ff0000"/><rect x="1042" y="155" width="11" height="3" fill="#ff0000"/><rect x="1063" y="152" width="1" height="37" fill="#ff0000"/><rect x="1058" y="157" width="11" height="14" fill="#ff0000"/><rect x="1079" y="167" width="1" height="78" fill="#ff0000"/><rect x="1074" y="170" width="11" height="62" fill="#ff0000"/><rect x="1095" y="212" width="1" height="45" fill="#00ff00"/><rect x="1090" y="229" width="11" height="3" fill="#00ff00"/><rect x="1111" y="170" width="1" height="72" fill="#00ff00"/><rect x="1106" y="201" width="11" height="28" fill="#00ff00"/><rect x="1127" y="188" width="1" height="36" fill="#ff0000"/><rect x="1122" y="201" width="11" height="23" fill="#ff0000"/><rect x="1143" y="185" width="1" height="63" fill="#ff0000"/><rect x="1138" y="223" width="11" height="12" fill="#ff0000"/><rect x="1159" y="231" width="1" height="64" fill="#ff0000"/><rect x="1154" y="233" width="11" height="41" fill="#ff0000"/><rect x="1175" y="258" width="1" height="39" fill="#ff0000"/><rect x="1170" y="274" width="11" height="20" fill="#ff0000"/><rect x="1191" y="278" width="1" height="40" fill="#ff0000"/><rect x="1186" y="294" width="11" height="3" fill="#ff0000"/><rect x="1207" y="289" width="1" height="37" fill="#00ff00"/><rect x="1202" y="290" width="11" height="8" fill="#00ff00"/><rect x="1223" y="252" width="1" height="84" fill="#ff0000"/><rect x="1218" y="289" width="11" height="30" fill="#ff0000"/><rect x="1239" y="275" width="1" height="47" fill="#00ff00"/><rect x="1234" y="284" width="11" height="35" fill="#00ff00"/><rect x="1255" y="277" width="1" height="12" fill="#ff0000"/><rect x="1250" y="283" width="11" height="2" fill="#ff0000"/><rect x="1271" y="254" width="1" height="34" fill="#00ff00"/><rect x="1266" y="256" width="11" height="29" fill="#00ff00"/><rect x="1287" y="161" width="1" height="98" fill="#00ff00"/><rect x="1282" y="177" width="11" height="79" fill="#00ff00"/><rect x="1303" y="134" width="1" height="60" fill="#ff0000"/><rect x="1298" y="177" width="11" height="2" fill="#ff0000"/><rect x="1319" y="178" width="1" height="33" fill="#ff0000"/><rect x="1314" y="178" width="11" height="32" fill="#ff0000"/><rect x="1335" y="182" width="1" height="28" fill="#00ff00"/><rect x="1330" y="182" width="11" height="28" fill="#00ff00"/><rect x="1351" y="132" width="1" height="78" fill="#ff0000"/><rect x="1346" y="181" width="11" height="3" fill="#ff0000"/><rect x="1367" y="140" width="1" height="65" fill="#00ff00"/><rect x="1362" y="150" width="11" height="34" fill="#00ff00"/><rect x="1383" y="136" width="1" height="57" fill="#ff0000"/><rect x="1378" y="150" width="11" height="10" fill="#ff0000"/><rect x="1399" y="145" width="1" height="42" fill="#ff0000"/><rect x="1394" y="160" width="11" height="2" fill="#ff0000"/><rect x="1415" y="143" width="1" height="36" fill="#ff0000"/><rect x="1410" y="161" width="11" height="5" fill="#ff0000"/><rect x="1431" y="135" width="1" height="34" fill="#00ff00"/><rect x="1426" y="156" width="11" height="11" fill="#00ff00"/><rect x="1447" y="103" width="1" height="58" fill="#00ff00"/><rect x="1442" y="143" width="11" height="14" fill="#00ff00"/><rect x="1463" y="142" width="1" height="86" fill="#ff0000"/><rect x="1458" y="142" width="11" height="50" fill="#ff0000"/><rect x="1479" y="158" width="1" height="47" fill="#00ff00"/><rect x="1474" y="159" width="11" height="33" fill="#00ff00"/><rect x="1495" y="148" width="1" height="41" fill="#ff0000"/><rect x="1490" y="158" width="11" height="13" fill="#ff0000"/><rect x="1511" y="130" width="1" height="251" fill="#ff0000"/><rect x="1506" y="169" width="11" height="198" fill="#ff0000"/><rect x="1527" y="232" width="1" height="144" fill="#00ff00"/><rect x="1522" y="315" width="11" height="50" fill="#00ff00"/></g>
<path d="M583.5,122 L588,127 L585.5,127 L585.5,130 L581.5,130 L581.5,127 L579,127 Z" fill="#1060c0" stroke="#fff" stroke-width="1.3" shape-rendering="auto"/><path d="M1255.5,268 L1260,273 L1257.5,273 L1257.5,276 L1253.5,276 L1253.5,273 L1251,273 Z" fill="#1060c0" stroke="#fff" stroke-width="1.3" shape-rendering="auto"/><path d="M1335.5,172 L1340,177 L1337.5,177 L1337.5,180 L1333.5,180 L1333.5,177 L1331,177 Z" fill="#1060c0" stroke="#fff" stroke-width="1.3" shape-rendering="auto"/><path d="M1223.5,323 L1228,318 L1225.5,318 L1225.5,315 L1221.5,315 L1221.5,318 L1219,318 Z" fill="#e04020" stroke="#fff" stroke-width="1.3" shape-rendering="auto"/><path d="M1303.5,181 L1308,176 L1305.5,176 L1305.5,173 L1301.5,173 L1301.5,176 L1299,176 Z" fill="#e04020" stroke="#fff" stroke-width="1.3" shape-rendering="auto"/><path d="M1303.5,187 L1308,182 L1305.5,182 L1305.5,179 L1301.5,179 L1301.5,182 L1299,182 Z" fill="#e04020" stroke="#fff" stroke-width="1.3" shape-rendering="auto"/><path d="M1527.5,260 L1532,255 L1529.5,255 L1529.5,252 L1525.5,252 L1525.5,255 L1523,255 Z" fill="#e04020" stroke="#fff" stroke-width="1.3" shape-rendering="auto"/><path d="M1527.5,337 L1532,342 L1529.5,342 L1529.5,345 L1525.5,345 L1525.5,342 L1523,342 Z" fill="#1060c0" stroke="#fff" stroke-width="1.3" shape-rendering="auto"/><path d="M1527.5,342 L1532,347 L1529.5,347 L1529.5,350 L1525.5,350 L1525.5,347 L1523,347 Z" fill="#1060c0" stroke="#fff" stroke-width="1.3" shape-rendering="auto"/><g fill="none" stroke-dasharray="2,3" shape-rendering="auto"><polyline points="1223,319 1255,272" stroke="#e07030"/><polyline points="1255,272 1303,186" stroke="#2070d0"/><polyline points="1303,180 1335,172" stroke="#e07030"/><polyline points="1287,190 1283,221" stroke="#2070d0"/><line x1="1527" y1="260" x2="1527" y2="338" stroke="#2070d0"/></g>
<g fill="none">
<polyline points="311,459.7 326.5,464 357.5,461.6 390.5,454.7 408,430.6 423,419 439,417 487,442 503,435 520,440 547,458 567,462 613,418 631,416 662,424 679,412 710,430.6 728,456 741,458.5 761,448 811,418 823,415 840,401.6 869,401.6 904,410.5 931,448 950,461 966,454 983,429 999,420 1014,417 1032,431 1045,438 1063,448 1078,456 1094,459 1111,452 1127,445 1142,443 1160,452 1175,461 1191,463 1206,460 1222,457 1239,446 1255,436 1272,413 1288,404 1303,403 1319,411 1336,418 1351,424 1367,417 1383,418 1400,416 1415,422 1431,421 1446,424 1464,434 1479,435 1495,438 1510,450 1528,456" stroke="#20b2aa"/>
<polyline points="311,440 326.5,454 342,461 361.5,463.6 390.5,458 423,438 447,420 493,434.5 532,440 574.5,458.5 598,450 644,418 706,421 761,454 776,450 823,421 873,401.6 904,407 931,427 950,448 966,456 983,446 999,431 1014,423 1032,424 1045,430 1063,438 1078,448 1094,454 1111,455 1127,451 1142,446 1160,448 1175,456 1191,458.5 1206,460 1222,460 1239,455 1255,443 1272,431 1288,417 1303,405 1319,406.6 1336,411 1351,418 1367,421 1383,421 1400,417 1415,419 1431,419 1446,422 1464,427 1479,431 1495,436 1510,442 1528,448" stroke="#ff0000" stroke-dasharray="4,3"/>
<polyline points="311,514 346,520 408,535 470,544 544,546 621,545 698,541 737,542 795,545 854,547 892,545 931,543.8 1008,545 1059,550 1105,555.4 1164,568 1222,585.7 1268,597 1291,600 1315,597 1350,585 1396,564 1435,545 1466,536 1489,532 1512,532 1528,535" stroke="#ff0000"/>
</g>
<g><rect x="311" y="503.0" width="1" height="0.0" fill="#00c000"/><rect x="327" y="499.0" width="1" height="4.0" fill="#00c000"/><rect x="343" y="500.0" width="1" height="3.0" fill="#ff0000"/><rect x="359" y="497.0" width="1" height="6.0" fill="#00c000"/><rect x="375" y="500.0" width="1" height="3.0" fill="#ff0000"/><rect x="391" y="501.0" width="1" height="2.0" fill="#ff0000"/><rect x="407" y="500.0" width="1" height="3.0" fill="#00c000"/><rect x="423" y="500.0" width="1" height="3.0" fill="#ff0000"/><rect x="439" y="501.0" width="1" height="2.0" fill="#ff0000"/><rect x="455" y="502.0" width="1" height="1.0" fill="#ff0000"/><rect x="471" y="502.0" width="1" height="1.0" fill="#ff0000"/><rect x="487" y="499.0" width="1" height="4.0" fill="#00c000"/><rect x="503" y="501.0" width="1" height="2.0" fill="#ff0000"/><rect x="519" y="498.0" width="1" height="5.0" fill="#00c000"/><rect x="535" y="499.0" width="1" height="4.0" fill="#ff0000"/><rect x="551" y="500.0" width="1" height="3.0" fill="#ff0000"/><rect x="567" y="501.0" width="1" height="2.0" fill="#ff0000"/><rect x="583" y="500.0" width="1" height="3.0" fill="#00c000"/><rect x="599" y="498.0" width="1" height="5.0" fill="#00c000"/><rect x="615" y="500.0" width="1" height="3.0" fill="#ff0000"/><rect x="631" y="497.0" width="1" height="6.0" fill="#00c000"/><rect x="647" y="501.0" width="1" height="2.0" fill="#ff0000"/><rect x="663" y="501.0" width="1" height="2.0" fill="#ff0000"/><rect x="679" y="498.0" width="1" height="5.0" fill="#00c000"/><rect x="695" y="498.0" width="1" height="5.0" fill="#ff0000"/><rect x="711" y="499.0" width="1" height="4.0" fill="#ff0000"/><rect x="727" y="499.0" width="1" height="4.0" fill="#ff0000"/><rect x="743" y="495.0" width="1" height="8.0" fill="#00c000"/><rect x="759" y="500.0" width="1" height="3.0" fill="#ff0000"/><rect x="775" y="502.0" width="1" height="1.0" fill="#ff0000"/><rect x="791" y="500.0" width="1" height="3.0" fill="#00c000"/><rect x="807" y="500.0" width="1" height="3.0" fill="#00c000"/><rect x="823" y="498.0" width="1" height="5.0" fill="#00c000"/><rect x="839" y="500.0" width="1" height="3.0" fill="#ff0000"/><rect x="855" y="498.0" width="1" height="5.0" fill="#00c000"/><rect x="871" y="501.0" width="1" height="2.0" fill="#ff0000"/><rect x="887" y="502.0" width="1" height="1.0" fill="#ff0000"/><rect x="903" y="502.0" width="1" height="1.0" fill="#ff0000"/><rect x="919" y="500.0" width="1" height="3.0" fill="#00c000"/><rect x="935" y="500.4" width="1" height="2.6000000000000227" fill="#00c000"/><rect x="951" y="497.7" width="1" height="5.300000000000011" fill="#00c000"/><rect x="967" y="501" width="1" height="2" fill="#ff0000"/><rect x="983" y="497" width="1" height="6" fill="#00c000"/><rect x="999" y="496" width="1" height="7" fill="#00c000"/><rect x="1015" y="496.5" width="1" height="6.5" fill="#ff0000"/><rect x="1031" y="499" width="1" height="4" fill="#ff0000"/><rect x="1047" y="497" width="1" height="6" fill="#00c000"/><rect x="1063" y="496" width="1" height="7" fill="#00c000"/><rect x="1079" y="489.5" width="1" height="13.5" fill="#00c000"/><rect x="1095" y="493" width="1" height="10" fill="#ff0000"/><rect x="1111" y="491" width="1" height="12" fill="#00c000"/><rect x="1127" y="494.6" width="1" height="8.399999999999977" fill="#ff0000"/><rect x="1143" y="492" width="1" height="11" fill="#00c000"/><rect x="1159" y="492.6" width="1" height="10.399999999999977" fill="#00c000"/><rect x="1175" y="493" width="1" height="10" fill="#ff0000"/><rect x="1191" y="492" width="1" height="11" fill="#00c000"/><rect x="1207" y="493" width="1" height="10" fill="#ff0000"/><rect x="1223" y="489" width="1" height="14" fill="#00c000"/><rect x="1239" y="495" width="1" height="8" fill="#ff0000"/><rect x="1255" y="498.5" width="1" height="4.5" fill="#ff0000"/><rect x="1271" y="497" width="1" height="6" fill="#00c000"/><rect x="1287" y="491" width="1" height="12" fill="#00c000"/><rect x="1303" y="491" width="1" height="12" fill="#ff0000"/><rect x="1319" y="496.5" width="1" height="6.5" fill="#ff0000"/><rect x="1335" y="496.5" width="1" height="6.5" fill="#ff0000"/><rect x="1351" y="494" width="1" height="9" fill="#00c000"/><rect x="1367" y="492" width="1" height="11" fill="#00c000"/><rect x="1383" y="492" width="1" height="11" fill="#00c000"/><rect x="1399" y="491" width="1" height="12" fill="#00c000"/><rect x="1415" y="492" width="1" height="11" fill="#ff0000"/><rect x="1431" y="494.6" width="1" height="8.399999999999977" fill="#ff0000"/><rect x="1447" y="491" width="1" height="12" fill="#00c000"/><rect x="1463" y="489.5" width="1" height="13.5" fill="#00c000"/><rect x="1479" y="492" width="1" height="11" fill="#ff0000"/><rect x="1495" y="492" width="1" height="11" fill="#ff0000"/><rect x="1511" y="477" width="1" height="26" fill="#00c000"/><rect x="1527" y="482" width="1" height="21" fill="#ff0000"/></g>
<g><rect x="325" y="533" width="5" height="10" fill="#c0c0c0"/><rect x="341" y="537" width="5" height="6" fill="#c0c0c0"/><rect x="357" y="543" width="5" height="1" fill="#c0c0c0"/><rect x="373" y="543" width="5" height="2" fill="#c0c0c0"/><rect x="389" y="543" width="5" height="4" fill="#c0c0c0"/><rect x="405" y="543" width="5" height="3" fill="#c0c0c0"/><rect x="421" y="543" width="5" height="2" fill="#c0c0c0"/><rect x="437" y="543" width="5" height="2" fill="#c0c0c0"/><rect x="453" y="543" width="5" height="2" fill="#c0c0c0"/><rect x="469" y="543" width="5" height="1" fill="#c0c0c0"/><rect x="485" y="543" width="5" height="2" fill="#c0c0c0"/><rect x="501" y="543" width="5" height="1" fill="#c0c0c0"/><rect x="517" y="543" width="5" height="1" fill="#c0c0c0"/><rect x="533" y="543" width="5" height="2" fill="#c0c0c0"/><rect x="549" y="543" width="5" height="2" fill="#c0c0c0"/><rect x="565" y="543" width="5" height="4" fill="#c0c0c0"/><rect x="581" y="543" width="5" height="2" fill="#c0c0c0"/><rect x="597" y="543" width="5" height="1" fill="#c0c0c0"/><rect x="613" y="543" width="5" height="1" fill="#c0c0c0"/><rect x="629" y="542.5" width="5" height="0.5" fill="#c0c0c0"/><rect x="645" y="542" width="5" height="1" fill="#c0c0c0"/><rect x="661" y="541" width="5" height="2" fill="#c0c0c0"/><rect x="677" y="537" width="5" height="6" fill="#c0c0c0"/><rect x="693" y="538" width="5" height="5" fill="#c0c0c0"/><rect x="709" y="538" width="5" height="5" fill="#c0c0c0"/><rect x="725" y="542" width="5" height="1" fill="#c0c0c0"/><rect x="741" y="543" width="5" height="4" fill="#c0c0c0"/><rect x="757" y="543" width="5" height="6" fill="#c0c0c0"/><rect x="773" y="543" width="5" height="7" fill="#c0c0c0"/><rect x="789" y="543" width="5" height="8" fill="#c0c0c0"/><rect x="805" y="543" width="5" height="6" fill="#c0c0c0"/><rect x="821" y="543" width="5" height="7" fill="#c0c0c0"/><rect x="837" y="543" width="5" height="4" fill="#c0c0c0"/><rect x="853" y="543" width="5" height="1" fill="#c0c0c0"/><rect x="869" y="541" width="5" height="2" fill="#c0c0c0"/><rect x="885" y="539" width="5" height="4" fill="#c0c0c0"/><rect x="901" y="538" width="5" height="5" fill="#c0c0c0"/><rect x="917" y="541" width="5" height="2" fill="#c0c0c0"/><rect x="933" y="543" width="5" height="3" fill="#c0c0c0"/><rect x="949" y="543" width="5" height="5" fill="#c0c0c0"/><rect x="965" y="543" width="5" height="8" fill="#c0c0c0"/><rect x="981" y="543" width="5" height="4" fill="#c0c0c0"/><rect x="997" y="543" width="5" height="3" fill="#c0c0c0"/><rect x="1013" y="543" width="5" height="3" fill="#c0c0c0"/><rect x="1029" y="543" width="5" height="5" fill="#c0c0c0"/><rect x="1045" y="543" width="5" height="6" fill="#c0c0c0"/><rect x="1061" y="543" width="5" height="10" fill="#c0c0c0"/><rect x="1077" y="543" width="5" height="19" fill="#c0c0c0"/><rect x="1093" y="543" width="5" height="26" fill="#c0c0c0"/><rect x="1109" y="543" width="5" height="28" fill="#c0c0c0"/><rect x="1125" y="543" width="5" height="33" fill="#c0c0c0"/><rect x="1141" y="543" width="5" height="36" fill="#c0c0c0"/><rect x="1157" y="543" width="5" height="44" fill="#c0c0c0"/><rect x="1173" y="543" width="5" height="51.60000000000002" fill="#c0c0c0"/><rect x="1189" y="543" width="5" height="57" fill="#c0c0c0"/><rect x="1205" y="543" width="5" height="61" fill="#c0c0c0"/><rect x="1221" y="543" width="5" height="67" fill="#c0c0c0"/><rect x="1237" y="543" width="5" height="66" fill="#c0c0c0"/><rect x="1253" y="543" width="5" height="65" fill="#c0c0c0"/><rect x="1269" y="543" width="5" height="58" fill="#c0c0c0"/><rect x="1285" y="543" width="5" height="44.60000000000002" fill="#c0c0c0"/><rect x="1301" y="543" width="5" height="33" fill="#c0c0c0"/><rect x="1317" y="543" width="5" height="26" fill="#c0c0c0"/><rect x="1333" y="543" width="5" height="18" fill="#c0c0c0"/><rect x="1349" y="543" width="5" height="11.700000000000045" fill="#c0c0c0"/><rect x="1365" y="543" width="5" height="3" fill="#c0c0c0"/><rect x="1381" y="540" width="5" height="3" fill="#c0c0c0"/><rect x="1397" y="534.5" width="5" height="8.5" fill="#c0c0c0"/><rect x="1413" y="531.4" width="5" height="11.600000000000023" fill="#c0c0c0"/><rect x="1429" y="529" width="5" height="14" fill="#c0c0c0"/><rect x="1445" y="524.4" width="5" height="18.600000000000023" fill="#c0c0c0"/><rect x="1461" y="527" width="5" height="16" fill="#c0c0c0"/><rect x="1477" y="526" width="5" height="17" fill="#c0c0c0"/><rect x="1493" y="526" width="5" height="17" fill="#c0c0c0"/><rect x="1509" y="543" width="5" height="7" fill="#c0c0c0"/><rect x="1525" y="543" width="5" height="21" fill="#c0c0c0"/></g>
<g fill="#fff" font-family='"Liberation Sans", sans-serif' font-size="10px" shape-rendering="auto">
<path d="M316,82 L323,82 L319.5,86 Z" fill="#fff"/>
<text transform="translate(326,88) scale(0.93,1)">EURUSD,M15</text>
<text transform="translate(314,403) scale(0.93,1)">Stoch(5,3,3) 21.01 30.25</text>
<text transform="translate(314,487) scale(0.93,1)">Volumes 2598</text>
<text transform="translate(314,518) scale(0.93,1)">MACD(12,26,9) -0.000254 0.000096</text>
</g>
</svg><div class="a" style="left:1405px;top:398px;width:193px;height:21px;background:linear-gradient(180deg,#fff,#e4e5f0);border:1px solid #767676;border-radius:2px;box-shadow:1px 1px 2px rgba(0,0,0,.4)"></div><div class="t" style="left:1410px;top:401px;font-size:12px;color:#4c4c4c;">Click and drag a border of window</div><div class="a" style="left:309px;top:640px;width:1291px;height:22px;background:#f0f0f0"></div><div class="a" style="left:309px;top:642px;width:1291px;height:1px;background:#000"></div><div class="a" style="left:311px;top:642px;width:92px;height:19px;background:#fff;border:1px solid #000;border-top:none"></div><div class="t" style="left:322px;top:646px;font-size:12px;color:#000;letter-spacing:-0.3px">EURUSD,M15</div><div class="t" style="left:416px;top:646px;font-size:12px;color:#6d6d6d;letter-spacing:-0.5px">GBPUSD,M5</div><div class="a" style="left:492px;top:646px;width:1px;height:13px;background:#808080"></div><div class="t" style="left:505px;top:646px;font-size:12px;color:#6d6d6d;letter-spacing:-0.5px">USDJPY,M5</div><div class="a" style="left:577px;top:646px;width:1px;height:13px;background:#808080"></div><div class="t" style="left:588px;top:646px;font-size:12px;color:#6d6d6d;letter-spacing:-0.5px">AUDJPY,Daily</div><div class="a" style="left:670px;top:646px;width:1px;height:13px;background:#808080"></div><div class="t" style="left:682px;top:646px;font-size:12px;color:#6d6d6d;letter-spacing:-0.5px">GBPAUD,M5</div><div class="a" style="left:759px;top:646px;width:1px;height:13px;background:#808080"></div><div class="t" style="left:771px;top:646px;font-size:12px;color:#6d6d6d;letter-spacing:-0.5px">CHFTRY,Daily</div><div class="a" style="left:855px;top:646px;width:1px;height:13px;background:#808080"></div><div class="t" style="left:867px;top:646px;font-size:12px;color:#6d6d6d;letter-spacing:-0.5px">USDJPYk,Daily</div><div class="a" style="left:952px;top:646px;width:1px;height:13px;background:#808080"></div><div class="t" style="left:965px;top:646px;font-size:12px;color:#6d6d6d;letter-spacing:-0.5px">EURNZD,M5</div><div class="a" style="left:1042px;top:646px;width:1px;height:13px;background:#808080"></div><div class="t" style="left:1054px;top:646px;font-size:12px;color:#6d6d6d;letter-spacing:-0.5px">USDCAD,M5</div><div class="a" style="left:1131px;top:646px;width:1px;height:13px;background:#808080"></div><svg class="a" style="left:1555px;top:646px" width="40" height="12"><path d="M10,2 L6,6 L10,10 Z" fill="#a0a0a0"/><path d="M27,2 L31,6 L27,10 Z" fill="#a0a0a0"/></svg><div class="a" style="left:0px;top:662px;width:1600px;height:1px;background:#a0a0a0"></div><div class="a" style="left:0px;top:663px;width:1600px;height:175px;background:#f0f0f0"></div><div class="t" style="left:3px;top:664px;font-size:15px;color:#000;font-weight:bold">×</div><div class="a" style="left:1px;top:680px;width:13px;height:150px;background:#cfdcea"></div><div class="t" style="left:-15px;top:806px;transform:rotate(-90deg);transform-origin:center;font-size:11px;color:#4a5868;width:44px">Toolbox</div><div class="a" style="left:15px;top:666px;width:1582px;height:147px;background:#fff;border:1px solid #828790;border-right-color:#dcdcdc;border-bottom:none"></div><div class="a" style="left:16px;top:667px;width:1580px;height:23px;background:linear-gradient(180deg,#fff 0%,#fff 45%,#f1f2f4 46%,#f1f2f4 100%);border-bottom:1px solid #d5d5d5"></div><div class="a" style="left:171px;top:667px;width:1px;height:22px;background:#e2e2e2"></div><div class="a" style="left:279px;top:667px;width:1px;height:22px;background:#e2e2e2"></div><div class="a" style="left:399px;top:667px;width:1px;height:22px;background:#e2e2e2"></div><div class="a" style="left:520px;top:667px;width:1px;height:22px;background:#e2e2e2"></div><div class="a" style="left:677px;top:667px;width:1px;height:22px;background:#e2e2e2"></div><div class="a" style="left:800px;top:667px;width:1px;height:22px;background:#e2e2e2"></div><div class="a" style="left:915px;top:667px;width:1px;height:22px;background:#e2e2e2"></div><div class="a" style="left:1035px;top:667px;width:1px;height:22px;background:#e2e2e2"></div><div class="a" style="left:1155px;top:667px;width:1px;height:22px;background:#e2e2e2"></div><div class="a" style="left:1287px;top:667px;width:1px;height:22px;background:#e2e2e2"></div><div class="t" style="left:22px;top:673px;font-size:12px;color:#000;">Symbol</div><div class="t" style="left:178px;top:673px;font-size:12px;color:#000;">Order</div><div class="t" style="right:1226px;top:673px;font-size:12px;color:#000;">Time</div><div class="t" style="left:383px;top:673px;font-size:10px;color:#999;">⁄</div><div class="t" style="right:1086px;top:673px;font-size:12px;color:#000;">Type</div><div class="t" style="right:930px;top:673px;font-size:12px;color:#000;">Volume</div><div class="t" style="right:810px;top:673px;font-size:12px;color:#000;">Price</div><div class="t" style="right:690px;top:673px;font-size:12px;color:#000;">S / L</div><div class="t" style="right:570px;top:673px;font-size:12px;color:#000;">T / P</div><div class="t" style="right:450px;top:673px;font-size:12px;color:#000;">Price</div><div class="t" style="right:318px;top:673px;font-size:12px;color:#000;">Profit</div><div class="t" style="right:10px;top:673px;font-size:12px;color:#000;">Comment</div><div class="a" style="left:16px;top:691px;width:1580px;height:20px;background:#c8c8c8"></div><svg class="a" style="left:21px;top:696px" width="10" height="10"><circle cx="4.5" cy="4.5" r="3.5" fill="#e8e8e8" stroke="#888"/></svg><div class="t" style="left:37px;top:693px;font-size:11.6px;color:#000;font-weight:bold">Balance: 537.14 USD&nbsp; Equity: 537.14&nbsp; Free Margin: 537.14</div><div class="t" style="right:317px;top:693px;font-size:11.6px;color:#000;font-weight:bold">0.00</div><div class="a" style="left:15px;top:811px;width:1582px;height:1px;background:#000"></div><div class="a" style="left:18px;top:810px;width:50px;height:19px;background:#fff;border:1px solid #000;border-top:none"></div><div class="t" style="left:27px;top:815px;font-size:12px;color:#000;">Trade</div><div class="t" style="left:78px;top:815px;font-size:12px;color:#6d6d6d;">Exposure</div><div class="a" style="left:136px;top:816px;width:1px;height:13px;background:#808080"></div><div class="t" style="left:146px;top:815px;font-size:12px;color:#6d6d6d;">History</div><div class="a" style="left:193px;top:816px;width:1px;height:13px;background:#808080"></div><div class="t" style="left:203px;top:815px;font-size:12px;color:#6d6d6d;">News</div><div class="a" style="left:255px;top:816px;width:1px;height:13px;background:#808080"></div><div class="t" style="left:264px;top:815px;font-size:12px;color:#6d6d6d;">Mailbox</div><div class="a" style="left:316px;top:816px;width:1px;height:13px;background:#808080"></div><div class="t" style="left:326px;top:815px;font-size:12px;color:#6d6d6d;">Company</div><div class="a" style="left:388px;top:816px;width:1px;height:13px;background:#808080"></div><div class="t" style="left:398px;top:815px;font-size:12px;color:#6d6d6d;">Market</div><div class="a" style="left:445px;top:816px;width:1px;height:13px;background:#808080"></div><div class="t" style="left:455px;top:815px;font-size:12px;color:#6d6d6d;">Alerts</div><div class="a" style="left:495px;top:816px;width:1px;height:13px;background:#808080"></div><div class="t" style="left:505px;top:815px;font-size:12px;color:#6d6d6d;">Signals</div><div class="a" style="left:552px;top:816px;width:1px;height:13px;background:#808080"></div><div class="t" style="left:562px;top:815px;font-size:12px;color:#6d6d6d;">Code Base</div><div class="a" style="left:626px;top:816px;width:1px;height:13px;background:#808080"></div><div class="t" style="left:637px;top:815px;font-size:12px;color:#6d6d6d;">Experts</div><div class="a" style="left:682px;top:816px;width:1px;height:13px;background:#808080"></div><div class="t" style="left:693px;top:815px;font-size:12px;color:#6d6d6d;">Journal</div><div class="a" style="left:742px;top:816px;width:1px;height:13px;background:#808080"></div><div class="t" style="left:233px;top:821px;font-size:9px;color:#e02020;font-weight:bold">99</div><div class="a" style="left:0px;top:836px;width:1600px;height:1px;background:#a0a0a0"></div><div class="a" style="left:0px;top:838px;width:1600px;height:22px;background:#f0f0f0"></div><div class="a" style="left:907px;top:840px;width:1px;height:18px;background:#a0a0a0"></div><div class="a" style="left:1035px;top:840px;width:1px;height:18px;background:#a0a0a0"></div><div class="a" style="left:1133px;top:840px;width:1px;height:18px;background:#a0a0a0"></div><div class="a" style="left:1204px;top:840px;width:1px;height:18px;background:#a0a0a0"></div><div class="a" style="left:1275px;top:840px;width:1px;height:18px;background:#a0a0a0"></div><div class="a" style="left:1343px;top:840px;width:1px;height:18px;background:#a0a0a0"></div><div class="a" style="left:1414px;top:840px;width:1px;height:18px;background:#a0a0a0"></div><div class="a" style="left:1480px;top:840px;width:1px;height:18px;background:#a0a0a0"></div><div class="t" style="left:913px;top:844px;font-size:12px;color:#000;letter-spacing:-0.4px">Default</div><div class="t" style="left:1040px;top:844px;font-size:12px;color:#000;letter-spacing:-0.4px">2015.02.24 13:30</div><div class="t" style="left:1139px;top:844px;font-size:12px;color:#000;letter-spacing:-0.4px">O: 1.13275</div><div class="t" style="left:1210px;top:844px;font-size:12px;color:#000;letter-spacing:-0.4px">H: 1.13333</div><div class="t" style="left:1281px;top:844px;font-size:12px;color:#000;letter-spacing:-0.4px">L: 1.13271</div><div class="t" style="left:1349px;top:844px;font-size:12px;color:#000;letter-spacing:-0.4px">C: 1.13294</div><div class="t" style="left:1505px;top:844px;font-size:12px;color:#000;letter-spacing:-0.4px">43.8 / 0.0 Mb</div><svg class="a" style="left:1485px;top:841px" width="18" height="18"><path d="M2,3 L8,1 L12,3 L12,15 L6,17 L2,15 Z" fill="#3a98e0" stroke="#1a60a0"/><circle cx="12" cy="13" r="4" fill="#30b030" stroke="#fff"/></svg><div class="a" style="left:0px;top:829px;width:164px;height:31px;background:linear-gradient(180deg,#e6f2fb,#f6fbff);border:1px solid #8aa0b4;border-left:none;border-radius:0 6px 0 0"></div><div class="t" style="left:3px;top:836px;font-size:12px;color:#000;">Order</div><div class="a" style="left:55px;top:829px;width:102px;height:18px;background:linear-gradient(180deg,#f2f8fc,#dfe9f2);border:1px solid #8aa0b4;border-top:none;border-radius:0 0 4px 4px"></div><div class="a" style="left:83px;top:829px;width:1px;height:18px;background:#9ab"></div><div class="a" style="left:110px;top:829px;width:1px;height:18px;background:#9ab"></div><div class="a" style="left:66px;top:832px;width:7px;height:7px;border:1px solid #555"></div><div class="a" style="left:64px;top:834px;width:7px;height:7px;background:#eef4fa;border:1px solid #555"></div><div class="a" style="left:66px;top:836px;width:3px;height:3px;border:1px solid #555"></div><div class="a" style="left:91px;top:833px;width:11px;height:8px;border:1px solid #aaa"></div><svg class="a" style="left:128px;top:832px" width="14" height="12"><path d="M2,1 L12,11 M12,1 L2,11" stroke="#555" stroke-width="3.2"/><path d="M2,1 L12,11 M12,1 L2,11" stroke="#f0f4f8" stroke-width="1.3"/></svg><div class="a" style="left:2px;top:857px;width:156px;height:2px;background:#60707a"></div><div class="a" style="left:0px;top:860px;width:1600px;height:40px;background:linear-gradient(90deg,#3a96d8 0%,#3590d4 35%,#2e84ca 55%,#2a78c0 68%,#2468b0 76%,#1f5496 82%,#1a4478 86%,#183f72 100%)"></div><div class="a" style="left:0px;top:860px;width:1600px;height:40px;background:linear-gradient(180deg,rgba(255,255,255,.12) 0%,rgba(255,255,255,0) 50%,rgba(0,0,0,.05) 100%)"></div><svg class="a" style="left:1060px;top:860px" width="120" height="40"><path d="M0,0 C30,5 55,20 70,40" stroke="rgba(200,230,255,.55)" stroke-width="7" fill="none" style="filter:blur(1.5px)"/></svg><div class="a" style="left:0px;top:860px;width:1600px;height:1px;background:#1a3a60"></div><svg class="a" style="left:8px;top:861px" width="38" height="38"><defs><linearGradient id="orbg" x1="0" y1="0" x2="0" y2="1"><stop offset="0" stop-color="#c8d4e0"/><stop offset="0.45" stop-color="#7a98b8"/><stop offset="0.5" stop-color="#1a4a80"/><stop offset="0.85" stop-color="#2a88c8"/><stop offset="1" stop-color="#40d0f0"/></linearGradient></defs><circle cx="19" cy="19" r="17.5" fill="url(#orbg)" stroke="#0c2c58" stroke-width="1.2"/><circle cx="19" cy="19" r="16.3" fill="none" stroke="rgba(255,255,255,.35)"/><path d="M10.5,9.5 C13,8 16,8 19,9.5 L17.5,17.5 C14.5,16 12,16 9,17.5 Z" fill="#f05a20"/><path d="M20,9.8 C23,11 26,11 28.5,10 L27,18 C24.5,19 21.5,19 18.5,17.8 Z" fill="#80c040"/><path d="M8.8,18.5 C11.5,17 14.5,17 17.3,18.5 L16,26.5 C13,25 10,25 7.5,26.5 Z" fill="#30a8f0"/><path d="M18.3,18.8 C21.5,20 24.5,20 26.8,19 L25.5,27 C23,28 20,28 17,26.8 Z" fill="#f8c020"/></svg><svg class="a" style="left:73px;top:862px" width="36" height="36"><defs><radialGradient id="ieg" cx="40%" cy="35%" r="70%"><stop offset="0" stop-color="#8fd8ff"/><stop offset="0.5" stop-color="#1a78d8"/><stop offset="1" stop-color="#0a3a90"/></radialGradient></defs><circle cx="19" cy="19" r="11" fill="url(#ieg)"/><path d="M12.5,19.5 H26 M13,16 C15,10 24,10 25.5,17 M13,21 C14,27 22,29 25,24" stroke="#fff" stroke-width="3" fill="none"/><path d="M3,30 C0,24 14,10 28,5 C36,2 35,9 30,12" stroke="#f0b820" stroke-width="2.2" fill="none"/></svg><svg class="a" style="left:134px;top:864px" width="34" height="32"><path d="M2,5 H11 L13,7 H30 V27 H2 Z" fill="#d8b860"/><rect x="5" y="4" width="8" height="4" fill="#fff" stroke="#aaa" stroke-width=".5"/><rect x="6" y="4.5" width="3" height="2" fill="#30b030"/><rect x="13" y="6" width="8" height="4" fill="#fff" stroke="#aaa" stroke-width=".5"/><rect x="14" y="6.5" width="3" height="2" fill="#e04040"/><rect x="20" y="8" width="8" height="4" fill="#fff" stroke="#aaa" stroke-width=".5"/><rect x="21" y="8.5" width="3" height="2" fill="#3080e0"/><path d="M2,11 H30 V28 H2 Z" fill="#f2dc90"/><path d="M8,18 H24 V28 H21 V21 H11 V28 H8 Z" fill="#9ad0f0"/></svg><svg class="a" style="left:196px;top:866px" width="32" height="30"><rect x="10" y="5" width="18" height="21" fill="#c8e0f0" stroke="#8ab0d0"/><rect x="7" y="3" width="18" height="21" fill="#b0d4ee" stroke="#7aa8cc"/><circle cx="14" cy="13.5" r="8.5" fill="#f07810"/><circle cx="14" cy="13.5" r="6.5" fill="#fff"/><circle cx="14" cy="13.5" r="5.8" fill="#f08a20"/><path d="M12,9.5 L18,13.5 L12,17.5 Z" fill="#fff"/></svg><div class="a" style="left:245px;top:861px;width:59px;height:38px;background:linear-gradient(180deg,rgba(255,255,255,.35),rgba(255,255,255,.12));border:1px solid rgba(255,255,255,.45);border-radius:3px"></div><svg class="a" style="left:259px;top:865px" width="32" height="32"><circle cx="16" cy="16" r="14" fill="#e03a2e"/><path d="M16,16 L2.5,11 A14,14 0 0 0 11,29 Z" fill="#30a040"/><path d="M16,16 L11,29 A14,14 0 0 0 30,14 Z" fill="#f8c820"/><circle cx="16" cy="16" r="6" fill="#fff"/><circle cx="16" cy="16" r="4.5" fill="#3a80e0"/></svg><svg class="a" style="left:320px;top:865px" width="34" height="32"><path d="M2,3 L18,16 L2,29 Z" fill="#7040b0"/><path d="M31,3 L15,16 L31,29 Z" fill="#c0b0e0"/></svg><div class="a" style="left:369px;top:861px;width:59px;height:38px;background:linear-gradient(180deg,rgba(255,255,255,.35),rgba(255,255,255,.12));border:1px solid rgba(255,255,255,.45);border-radius:3px"></div><div class="a" style="left:383px;top:864px;width:32px;height:32px;background:#000"></div><svg class="a" style="left:383px;top:864px" width="32" height="32" viewBox="0 0 32 32"><path d="M2,21 L12,15.5 M10,12.5 H21 L9,19.5 M10,12.5 C6,14 5,18 8,19.5 C11,21 17,20 20,16 M16,21 L29,12 M18,12.5 L30,21" stroke="#f0c400" stroke-width="2" fill="none" stroke-linecap="round"/></svg><div class="t" style="left:1391px;top:872px;font-size:12px;color:#fff;">EN</div><svg class="a" style="left:1420px;top:874px" width="12" height="10"><path d="M1,8 L6,3 L11,8 Z" fill="#fff"/></svg><svg class="a" style="left:1442px;top:873px" width="18" height="18"><path d="M2,1 V16" stroke="#fff" stroke-width="1.5"/><path d="M3,2 L11,2 L12,4 L15,4 L15,10 L3,10 Z" fill="#fff"/><circle cx="12" cy="12" r="4.5" fill="#e02020" stroke="#fff"/><path d="M10,10 L14,14 M14,10 L10,14" stroke="#fff" stroke-width="1.2"/></svg><svg class="a" style="left:1467px;top:875px" width="18" height="14"><rect x="1" y="11" width="2" height="2" fill="#fff"/><rect x="5" y="8" width="2" height="5" fill="#cde"/><rect x="9" y="5" width="2" height="8" fill="#9ab"/><rect x="13" y="2" width="2" height="11" fill="#9ab"/></svg><svg class="a" style="left:1490px;top:873px" width="18" height="18"><path d="M1,6 H5 L10,2 V16 L5,12 H1 Z" fill="#fff"/><path d="M12,6 C14,8 14,10 12,12 M14,4 C17,7 17,11 14,14" stroke="#fff" fill="none"/></svg><div class="t" style="left:1526px;top:866px;font-size:12px;color:#fff;letter-spacing:-0.3px">10:05 PM</div><div class="t" style="left:1525px;top:885px;font-size:12px;color:#fff;letter-spacing:-0.3px">2/24/2015</div><div class="a" style="left:1586px;top:862px;width:12px;height:37px;background:linear-gradient(180deg,#3a6aa0,#1c4a80);border:1px solid #5a8ac0"></div>
</body></html>
